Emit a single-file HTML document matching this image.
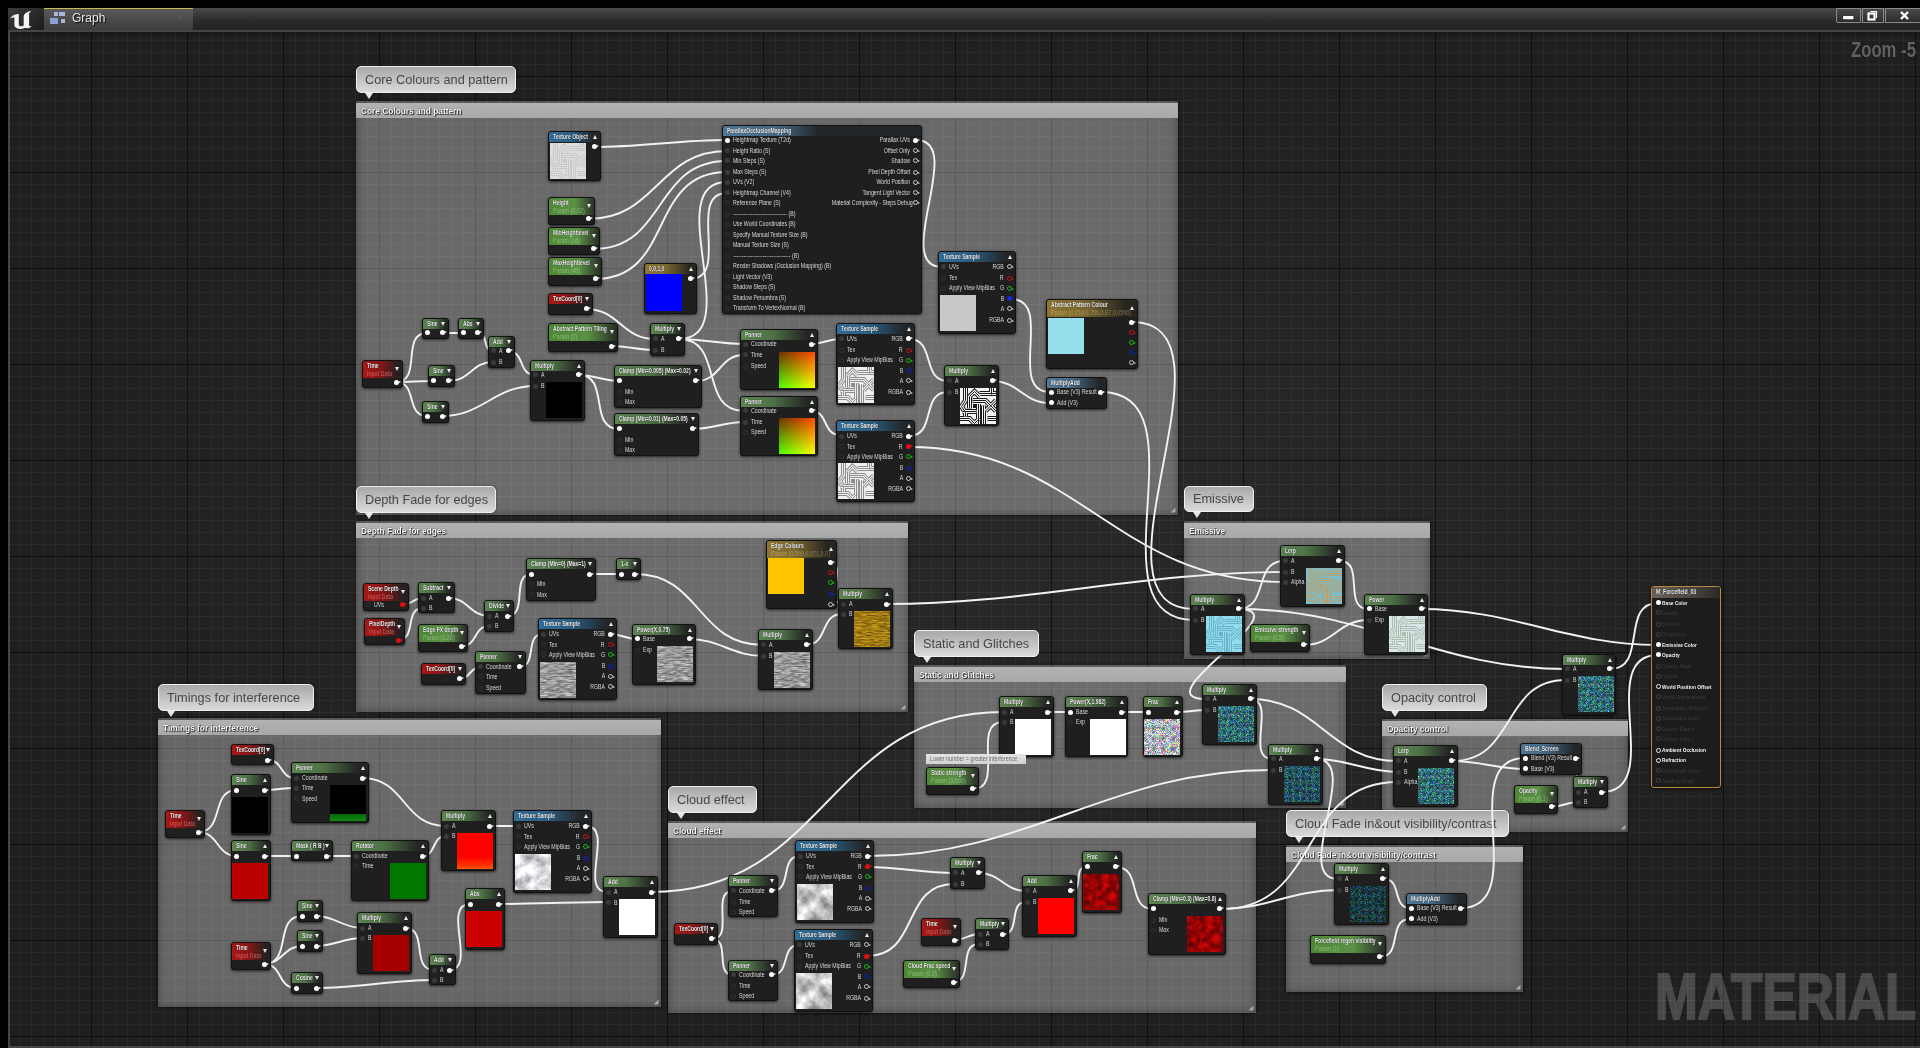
<!DOCTYPE html><html><head><meta charset="utf-8"><style>
*{margin:0;padding:0;box-sizing:border-box}
html,body{width:1920px;height:1048px;overflow:hidden;background:#000;font-family:"Liberation Sans",sans-serif}
.a{position:absolute}
#grid{position:absolute;left:10px;top:32px;width:1910px;height:1014px;background-color:#272727;
background-image:linear-gradient(to right,#121212 1px,transparent 1px),linear-gradient(to bottom,#121212 1px,transparent 1px),linear-gradient(to right,#333 1px,transparent 1px),linear-gradient(to bottom,#333 1px,transparent 1px);
background-size:96px 96px,96px 96px,12px 12px,12px 12px;background-position:81px 44px,81px 44px,9px 8px,9px 8px}
.cb{position:absolute;background:rgba(255,255,255,.32);box-shadow:inset 0 0 10px rgba(0,0,0,.35),0 0 3px rgba(0,0,0,.8)}
.ch{position:absolute;left:0;right:0;top:2px;height:15px;background:linear-gradient(#b2b2b2,#a8a8a8);color:#fff;font-size:9.8px;font-weight:bold;line-height:15px;padding-left:5px;text-shadow:0 0 1px #000,1px 1px 1px #222;white-space:nowrap}
.ch span{display:inline-block;transform-origin:0 50%;transform:scaleX(.85)}
.bub{position:absolute;border-radius:5px;background:linear-gradient(#a8a8a8,#dadada);border:1px solid #f0f0f0;box-shadow:0 0 2px rgba(0,0,0,.6);color:#474747;font-size:13.4px;padding-left:8px;white-space:nowrap}
.bub span{display:inline-block;transform-origin:0 50%;transform:scaleX(.95)}
.bub:after{content:"";position:absolute;left:8px;bottom:-7px;border-left:4px solid transparent;border-right:4px solid transparent;border-top:6px solid #e6e6e6}
.n{position:absolute;background:#1f1f1f;border:1px solid #111;border-radius:3px;box-shadow:0 1px 3px rgba(0,0,0,.7);overflow:hidden}
.nh{position:absolute;left:0;top:0;right:0;color:#f0f0f0;font-size:6.8px;line-height:8px;padding:1px 0 0 4px;white-space:nowrap;text-shadow:0 0 1px #000}
.nh span{display:inline-block;transform-origin:0 50%;transform:scaleX(.8)}
.nh span:first-child{font-weight:bold;transform:scaleX(.74)}
.ns{color:rgba(215,240,200,.42);text-shadow:none}
.r .ns{color:rgba(255,140,140,.6)}
.o .ns{color:rgba(255,230,160,.35)}
.tri{position:absolute;right:3px;top:2px;width:0;height:0;border-left:2.5px solid transparent;border-right:2.5px solid transparent}
.up{border-bottom:4px solid #e8e8e8}
.dn{border-top:4px solid #e8e8e8}
.lb{position:absolute;font-size:6.4px;color:#d8d8d8;white-space:nowrap;line-height:8px}
.lb span{display:inline-block;transform-origin:0 50%;transform:scaleX(.82)}
.lbr span{transform-origin:100% 50%}
.pc{position:absolute;width:5px;height:5px;border-radius:50%;background:#fff}
.pu{position:absolute;width:5px;height:5px;border-radius:50%;background:#3a3a3a}
.po{position:absolute;width:5px;height:5px;border-radius:50%;border:1px solid #333}
.pv{position:absolute}
.ar::after{content:"";position:absolute;left:3.5px;top:.5px;border-left:2px solid currentColor;border-top:1.5px solid transparent;border-bottom:1.5px solid transparent}
.pc.ar::after{left:4.5px;top:1px}

</style></head><body>
<svg width="0" height="0" style="position:absolute">
<defs>
<filter id="fGrey" x="0" y="0" width="100%" height="100%" color-interpolation-filters="sRGB"><feTurbulence type="fractalNoise" baseFrequency="0.12 0.7" numOctaves="3" seed="3"/><feColorMatrix type="matrix" values="0.75 0 0 0 0.22  0.75 0 0 0 0.22  0.75 0 0 0 0.22  0 0 0 0 1"/><feComposite in2="SourceGraphic" operator="in"/></filter>
<filter id="fGold" x="0" y="0" width="100%" height="100%" color-interpolation-filters="sRGB"><feTurbulence type="fractalNoise" baseFrequency="0.12 0.7" numOctaves="3" seed="5"/><feColorMatrix type="matrix" values="0.75 0 0 0 0.25  0.6 0 0 0 0.18  0.1 0 0 0 0.02  0 0 0 0 1"/><feComposite in2="SourceGraphic" operator="in"/></filter>
<filter id="fCloud" x="0" y="0" width="100%" height="100%" color-interpolation-filters="sRGB"><feTurbulence type="fractalNoise" baseFrequency="0.065" numOctaves="4" seed="7"/><feColorMatrix type="matrix" values="1.0 0 0 0 0.25  1.0 0 0 0 0.25  1.0 0 0 0 0.25  0 0 0 0 1"/><feComposite in2="SourceGraphic" operator="in"/></filter>
<filter id="fCloudW" x="0" y="0" width="100%" height="100%" color-interpolation-filters="sRGB"><feTurbulence type="fractalNoise" baseFrequency="0.09" numOctaves="4" seed="11"/><feColorMatrix type="matrix" values="0.8 0 0 0 0.45  0.8 0 0 0 0.45  0.8 0 0 0 0.47  0 0 0 0 1"/><feComposite in2="SourceGraphic" operator="in"/></filter>
<filter id="fCol" x="0" y="0" width="100%" height="100%" color-interpolation-filters="sRGB"><feTurbulence type="turbulence" baseFrequency="0.9" numOctaves="1" seed="2"/><feColorMatrix type="matrix" values="1.8 0 0 0 0.4  0 1.8 0 0 0.4  0 0 1.8 0 0.45  0 0 0 0 1"/><feComposite in2="SourceGraphic" operator="in"/></filter>
<filter id="fTeal" x="0" y="0" width="100%" height="100%" color-interpolation-filters="sRGB"><feTurbulence type="turbulence" baseFrequency="0.85" numOctaves="1" seed="5"/><feColorMatrix type="matrix" values="0.9 0 0 0 0.05  0 1.3 0 0 0.22  0 0 1.2 0 0.25  0 0 0 0 1"/><feComposite in2="SourceGraphic" operator="in"/></filter>
<filter id="fTeal2" x="0" y="0" width="100%" height="100%" color-interpolation-filters="sRGB"><feTurbulence type="turbulence" baseFrequency="0.85" numOctaves="1" seed="8"/><feColorMatrix type="matrix" values="0.7 0 0 0 0.03  0 1.1 0 0 0.15  0 0 1.1 0 0.2  0 0 0 0 1"/><feComposite in2="SourceGraphic" operator="in"/></filter>
<filter id="fDark" x="0" y="0" width="100%" height="100%" color-interpolation-filters="sRGB"><feTurbulence type="turbulence" baseFrequency="0.85" numOctaves="1" seed="9"/><feColorMatrix type="matrix" values="0.5 0 0 0 0.02  0 0.8 0 0 0.1  0 0 0.8 0 0.12  0 0 0 0 1"/><feComposite in2="SourceGraphic" operator="in"/></filter>
<filter id="fRed" x="0" y="0" width="100%" height="100%" color-interpolation-filters="sRGB"><feTurbulence type="fractalNoise" baseFrequency="0.15" numOctaves="3" seed="4"/><feColorMatrix type="matrix" values="0.75 0 0 0 0.22  0.03 0 0 0 0  0.03 0 0 0 0  0 0 0 0 1"/><feComposite in2="SourceGraphic" operator="in"/></filter>

</defs></svg>
<div class="a" style="left:8px;top:8px;width:1912px;height:22px;background:linear-gradient(#4a4a4a,#2b2b2b 55%,#222)"></div>
<div class="a" style="left:8px;top:8px;width:36px;height:22px;background:linear-gradient(135deg,#3c3c3c,#1c1c1c)"></div>
<svg class="a" style="left:8px;top:8px" width="36" height="22"><path transform="translate(0.5 -1.5) scale(.98 .82)" d="M1.5 14.5C3.5 11 6.5 9.5 9.5 9L10.5 9L10.5 22C10.5 24 12.5 24.8 14.5 23.8L15.5 23.2L15.5 12C15.5 9.5 18 7 22 5.5L23 5.5L21 8.2L21 22.5C21 24 22.3 24.6 23.8 23.8C22 26.5 19 27.2 17 26C15 27.6 11 27.8 8.5 26.5C6.8 25.5 6 24 6 22L6 13.2C4.5 13.4 3 13.9 1.5 14.5Z" fill="#f4f4f4"/></svg>
<div class="a" style="left:44px;top:8px;width:149px;height:22px;background:linear-gradient(#5a5a5a,#3c3c3c);border-top:1px solid #c9b458"></div>
<div class="a" style="left:54px;top:12px;width:4px;height:4px;background:#a9b6dc"></div><div class="a" style="left:59px;top:12px;width:6px;height:4px;background:#a9b6dc"></div><div class="a" style="left:50px;top:18px;width:8px;height:6px;background:#8c9fd4"></div><div class="a" style="left:61px;top:19px;width:4px;height:4px;background:#a9b6dc"></div>
<div class="a" style="left:72px;top:10px;color:#e8e8e8;font-size:12px;line-height:16px;text-shadow:1px 1px 1px #000">Graph</div>
<div class="a" style="left:176px;top:10px;color:#5a5a5a;font-size:12px;line-height:16px">&#215;</div>
<div class="a" style="left:1836px;top:8px;width:25px;height:15px;border:1px solid #8a8a8a;border-radius:0 0 0 2px;background:linear-gradient(#4a4a4a,#2c2c2c)"></div>
<div class="a" style="left:1862px;top:8px;width:22px;height:15px;border:1px solid #8a8a8a;background:linear-gradient(#4a4a4a,#2c2c2c)"></div>
<div class="a" style="left:1885px;top:8px;width:35px;height:15px;border:1px solid #8a8a8a;border-right:none;background:linear-gradient(#4a4a4a,#2c2c2c)"></div>
<svg class="a" style="left:1836px;top:8px" width="84" height="16"><g fill="none" stroke="#fff" stroke-linecap="square"><rect x="7" y="8" width="10.5" height="3.2" fill="#fff" stroke="none" rx="1"/><path d="M35 3.5h5.5v6" stroke-width="1.2"/><rect x="32.5" y="5.5" width="6" height="6" stroke-width="2.2"/><path d="M65 4l7 7M72 4l-7 7" stroke-width="2.4" stroke-linecap="butt"/></g></svg>
<div class="a" style="left:8px;top:30px;width:1912px;height:1018px;background:#454545"></div>
<div id="grid"></div>
<div class="a" style="left:10px;top:32px;width:1910px;height:1014px;background:radial-gradient(ellipse 960px 540px at 950px 508px,rgba(0,0,0,0) 30%,rgba(0,0,0,.2) 100%)"></div>
<div class="a" style="left:10px;top:32px;width:1910px;height:6px;background:linear-gradient(rgba(0,0,0,.25),rgba(0,0,0,0))"></div>
<div class="a" style="left:1851px;top:39px;color:#626262;text-shadow:0 0 2px #151515;font-size:21.7px;font-weight:bold;line-height:21.7px;white-space:nowrap;transform-origin:0 0;transform:scaleX(.77)">Zoom -5</div>
<div class="a" style="left:1655px;top:964px;color:#2a2a2a;-webkit-text-stroke:2.2px #2a2a2a;mix-blend-mode:plus-lighter;font-size:65px;font-weight:bold;line-height:65px;white-space:nowrap;transform-origin:0 0;transform:scaleX(.79)">MATERIAL</div>
<div class="cb" style="left:356px;top:101px;width:822px;height:414px"><div class="ch"><span>Core Colours and pattern</span></div><svg class="a" style="right:1px;bottom:1px" width="8" height="8"><path d="M2.5 6.5L6.5 2.5M4.5 6.5L6.5 4.5" stroke="#b0b0b0" stroke-width="1.2"/></svg></div>
<div class="cb" style="left:356px;top:521px;width:552px;height:191px"><div class="ch"><span>Depth Fade for edges</span></div><svg class="a" style="right:1px;bottom:1px" width="8" height="8"><path d="M2.5 6.5L6.5 2.5M4.5 6.5L6.5 4.5" stroke="#b0b0b0" stroke-width="1.2"/></svg></div>
<div class="cb" style="left:158px;top:718px;width:503px;height:289px"><div class="ch"><span>Timings for interference</span></div><svg class="a" style="right:1px;bottom:1px" width="8" height="8"><path d="M2.5 6.5L6.5 2.5M4.5 6.5L6.5 4.5" stroke="#b0b0b0" stroke-width="1.2"/></svg></div>
<div class="cb" style="left:1184px;top:521px;width:246px;height:138px"><div class="ch"><span>Emissive</span></div><svg class="a" style="right:1px;bottom:1px" width="8" height="8"><path d="M2.5 6.5L6.5 2.5M4.5 6.5L6.5 4.5" stroke="#b0b0b0" stroke-width="1.2"/></svg></div>
<div class="cb" style="left:914px;top:665px;width:432px;height:143px"><div class="ch"><span>Static and Glitches</span></div><svg class="a" style="right:1px;bottom:1px" width="8" height="8"><path d="M2.5 6.5L6.5 2.5M4.5 6.5L6.5 4.5" stroke="#b0b0b0" stroke-width="1.2"/></svg></div>
<div class="cb" style="left:668px;top:821px;width:588px;height:192px"><div class="ch"><span>Cloud effect</span></div><svg class="a" style="right:1px;bottom:1px" width="8" height="8"><path d="M2.5 6.5L6.5 2.5M4.5 6.5L6.5 4.5" stroke="#b0b0b0" stroke-width="1.2"/></svg></div>
<div class="cb" style="left:1382px;top:719px;width:246px;height:113px"><div class="ch"><span>Opacity control</span></div><svg class="a" style="right:1px;bottom:1px" width="8" height="8"><path d="M2.5 6.5L6.5 2.5M4.5 6.5L6.5 4.5" stroke="#b0b0b0" stroke-width="1.2"/></svg></div>
<div class="cb" style="left:1286px;top:845px;width:237px;height:147px"><div class="ch"><span>Cloud Fade in&amp;out visibility/contrast</span></div><svg class="a" style="right:1px;bottom:1px" width="8" height="8"><path d="M2.5 6.5L6.5 2.5M4.5 6.5L6.5 4.5" stroke="#b0b0b0" stroke-width="1.2"/></svg></div>
<div class="bub" style="left:356px;top:66px;width:160px;height:27px;line-height:25px"><span>Core Colours and pattern</span></div>
<div class="bub" style="left:356px;top:486px;width:140px;height:27px;line-height:25px"><span>Depth Fade for edges</span></div>
<div class="bub" style="left:158px;top:684px;width:156px;height:27px;line-height:25px"><span>Timings for interference</span></div>
<div class="bub" style="left:1184px;top:486px;width:70px;height:26px;line-height:24px"><span>Emissive</span></div>
<div class="bub" style="left:914px;top:630px;width:125px;height:27px;line-height:25px"><span>Static and Glitches</span></div>
<div class="bub" style="left:668px;top:786px;width:89px;height:27px;line-height:25px"><span>Cloud effect</span></div>
<div class="bub" style="left:1382px;top:684px;width:105px;height:27px;line-height:25px"><span>Opacity control</span></div>
<div class="bub" style="left:1286px;top:810px;width:223px;height:27px;line-height:25px"><span>Cloud Fade in&amp;out visibility/contrast</span></div>
<svg class="a" style="left:0;top:0" width="1920" height="1048"><g fill="none" stroke="#f2f2f2" stroke-width="1.9" stroke-linecap="round">
<path d="M594 147C640.7 147 680.3 140 727 140"/>
<path d="M588 219C657.0 219 658.0 151 727 151"/>
<path d="M593 249C667.0 249 653.0 161 727 161"/>
<path d="M595 279C674.7 279 647.3 172 727 172"/>
<path d="M690 279C731.0 279 686.0 193 727 193"/>
<path d="M679 339C747.3 339 658.7 182 727 182"/>
<path d="M586 309C619.0 309 622.0 339 655 339"/>
<path d="M611 346C627.0 346 639.0 350 655 350"/>
<path d="M679 339C702.3 339 720.7 344 744 344"/>
<path d="M679 339C724.7 339 698.3 411 744 411"/>
<path d="M696 381C720.7 381 719.3 355 744 355"/>
<path d="M693 429C712.3 429 724.7 422 744 422"/>
<path d="M396 382C422.7 382 400.3 333 427 333"/>
<path d="M396 382C408.7 382 420.3 381 433 381"/>
<path d="M396 382C417.7 382 405.3 416 427 416"/>
<path d="M442 333C449.0 333 456.0 333 463 333"/>
<path d="M478 333C489.0 333 482.0 351 493 351"/>
<path d="M449 381C470.0 381 472.0 362 493 362"/>
<path d="M508 351C525.0 351 518.0 375 535 375"/>
<path d="M442 416C483.0 416 494.0 386 535 386"/>
<path d="M579 375C594.3 375 603.7 381 619 381"/>
<path d="M579 375C610.3 375 587.7 429 619 429"/>
<path d="M811 344C822.3 344 828.7 339 840 339"/>
<path d="M811 411C828.7 411 822.3 435 840 435"/>
<path d="M909 339C936.0 339 921.0 381 948 381"/>
<path d="M909 436C936.7 436 920.3 392 948 392"/>
<path d="M909 447C1079.0 447 1114.0 582 1284 582"/>
<path d="M916 140C967.0 140 891.0 267 942 267"/>
<path d="M1011 299C1055.0 299 1006.0 392 1050 392"/>
<path d="M992 381C1018.7 381 1023.3 403 1050 403"/>
<path d="M1132 322C1248.3 322 1077.7 609 1194 609"/>
<path d="M1101 392C1208.0 392 1087.0 620 1194 620"/>
<path d="M402 605C411.3 605 413.7 598 423 598"/>
<path d="M398 640C417.0 640 404.0 608 423 608"/>
<path d="M449 598C468.3 598 469.7 616 489 616"/>
<path d="M462 646C477.7 646 473.3 626 489 626"/>
<path d="M507 616C529.3 616 509.7 574 532 574"/>
<path d="M589 574C599.7 574 610.3 574 621 574"/>
<path d="M635 574C701.3 574 696.7 645 763 645"/>
<path d="M459 679C470.3 679 469.7 667 481 667"/>
<path d="M519 667C538.0 667 524.0 634 543 634"/>
<path d="M610 634C620.7 634 626.3 639 637 639"/>
<path d="M689 639C719.3 639 732.7 656 763 656"/>
<path d="M806 645C828.3 645 819.7 614 842 614"/>
<path d="M830 562C848.0 562 824.0 604 842 604"/>
<path d="M886 604C1029.3 604 1140.7 572 1284 572"/>
<path d="M198 832C225.0 832 210.0 790 237 790"/>
<path d="M198 832C219.0 832 216.0 856 237 856"/>
<path d="M268 760C283.0 760 280.0 778 295 778"/>
<path d="M264 790C275.0 790 284.0 788 295 788"/>
<path d="M362 778C406.0 778 402.0 826 446 826"/>
<path d="M264 856C274.7 856 285.3 856 296 856"/>
<path d="M327 856C336.7 856 346.3 856 356 856"/>
<path d="M422 856C436.7 856 431.3 836 446 836"/>
<path d="M264 964C292.7 964 273.3 916 302 916"/>
<path d="M264 964C282.7 964 283.3 946 302 946"/>
<path d="M264 964C282.7 964 277.3 988 296 988"/>
<path d="M316 916C335.3 916 342.7 928 362 928"/>
<path d="M316 946C334.0 946 344.0 938 362 938"/>
<path d="M316 988C358.0 988 392.0 980 434 980"/>
<path d="M405 928C428.7 928 410.3 970 434 970"/>
<path d="M449 970C478.0 970 441.0 904 470 904"/>
<path d="M489 826C498.7 826 508.3 826 518 826"/>
<path d="M586 826C615.0 826 578.0 892 607 892"/>
<path d="M498 904C535.0 904 570.0 902 607 902"/>
<path d="M651 892C828.3 892 825.7 712 1003 712"/>
<path d="M712 939C735.0 939 710.0 891 733 891"/>
<path d="M712 939C731.0 939 714.0 975 733 975"/>
<path d="M772 891C793.0 891 779.0 856 800 856"/>
<path d="M772 975C791.0 975 780.0 945 799 945"/>
<path d="M868 867C898.7 867 923.3 873 954 873"/>
<path d="M867 956C920.0 956 901.0 884 954 884"/>
<path d="M868 856C1031.3 856 1108.7 770 1272 770"/>
<path d="M955 940C965.0 940 969.0 934 979 934"/>
<path d="M953 982C974.3 982 957.7 944 979 944"/>
<path d="M979 873C1000.7 873 1004.3 891 1026 891"/>
<path d="M1003 934C1021.3 934 1007.7 902 1026 902"/>
<path d="M1071 891C1084.0 891 1073.0 867 1086 867"/>
<path d="M1116 867C1142.3 867 1126.7 909 1153 909"/>
<path d="M1221 909C1322.3 909 1296.7 782 1398 782"/>
<path d="M1221 909C1266.3 909 1292.7 890 1338 890"/>
<path d="M973 789C1005.3 789 970.7 722 1003 722"/>
<path d="M1048 712C1055.0 712 1062.0 712 1069 712"/>
<path d="M1122 712C1130.3 712 1138.7 712 1147 712"/>
<path d="M1177 712C1187.7 712 1196.3 710 1207 710"/>
<path d="M1250 699C1277.3 699 1244.7 759 1272 759"/>
<path d="M1250 699C1320.0 699 1328.0 761 1398 761"/>
<path d="M1316 759C1363.3 759 1290.7 879 1338 879"/>
<path d="M1316 759C1347.7 759 1366.3 772 1398 772"/>
<path d="M1238 609C1304.3 609 1139.7 699 1206 699"/>
<path d="M1238 609C1269.3 609 1252.7 561 1284 561"/>
<path d="M1238 609C1367.3 609 1436.7 669 1566 669"/>
<path d="M1340 561C1365.3 561 1342.7 609 1368 609"/>
<path d="M1304 645C1333.7 645 1338.3 620 1368 620"/>
<path d="M1421 609C1512.0 609 1567.0 645 1658 645"/>
<path d="M1610 669C1648.0 669 1620.0 603 1658 603"/>
<path d="M1452 761C1517.0 761 1501.0 680 1566 680"/>
<path d="M1452 761C1479.0 761 1498.0 769 1525 769"/>
<path d="M1461 908C1532.3 908 1453.7 758 1525 758"/>
<path d="M1576 758C1588.0 758 1566.0 792 1578 792"/>
<path d="M1551 807C1561.7 807 1567.3 802 1578 802"/>
<path d="M1602 792C1666.3 792 1593.7 655 1658 655"/>
<path d="M1384 879C1402.3 879 1391.7 908 1410 908"/>
<path d="M1380 957C1402.7 957 1387.3 919 1410 919"/>
</g></svg>
<div class="n b" style="left:548px;top:131px;width:53px;height:50px"><div class="nh" style="height:10px;background:linear-gradient(to right,#2f6d98 0px,#2a5f85 21px,#222629 45px)"><span>Texture Object</span></div><div class="tri up" style="top:3px"></div></div>
<svg class="pv" style="left:550px;top:143px;width:36px;height:36px" width="36" height="36" viewBox="0 0 36 36" preserveAspectRatio="none"><rect width="36" height="36" fill="#dedede"/><g fill="none" stroke-linecap="butt" stroke-linejoin="miter"><path d="M5.5 0V12.5L1.5 18.5L5.5 24.5V28.5M9.5 20.5V8.5L14.5 3.5L19.5 8.5M19.5 5.5H36M12.5 12.5H25.5L30.5 17.5M25.5 12.5L36 23M36 12.5L25.5 23M18.5 16V36M23.5 17.5V36M2.5 23.5H16.5M0 30.5H9.5L14.5 35.5L19.5 30.5M27.5 30.5H36M31.5 0V6.5" stroke="#c8c8c8" stroke-width="5"/><path d="M5.5 0V12.5L1.5 18.5L5.5 24.5V28.5M9.5 20.5V8.5L14.5 3.5L19.5 8.5M19.5 5.5H36M12.5 12.5H25.5L30.5 17.5M25.5 12.5L36 23M36 12.5L25.5 23M18.5 16V36M23.5 17.5V36M2.5 23.5H16.5M0 30.5H9.5L14.5 35.5L19.5 30.5M27.5 30.5H36M31.5 0V6.5" stroke="#dedede" stroke-width="3"/><path d="M5.5 0V12.5L1.5 18.5L5.5 24.5V28.5M9.5 20.5V8.5L14.5 3.5L19.5 8.5M19.5 5.5H36M12.5 12.5H25.5L30.5 17.5M25.5 12.5L36 23M36 12.5L25.5 23M18.5 16V36M23.5 17.5V36M2.5 23.5H16.5M0 30.5H9.5L14.5 35.5L19.5 30.5M27.5 30.5H36M31.5 0V6.5" stroke="#c8c8c8" stroke-width="1"/></g><rect x="13" y="16" width="3" height="4" fill="#c8c8c8"/></svg>
<div class="pc ar" style="left:592px;top:144px;color:#eee"></div>
<div class="n p" style="left:548px;top:197px;width:47px;height:28px"><div class="nh" style="height:17px;background:linear-gradient(to right,#4e8836 0px,#5a9244 26px,#282c26 46px)"><span>Height</span><br><span class="ns">Param (0.02)</span></div><div class="tri dn" style="top:6px"></div></div>
<div class="pc ar" style="left:586px;top:216px;color:#eee"></div>
<div class="n p" style="left:548px;top:227px;width:52px;height:28px"><div class="nh" style="height:17px;background:linear-gradient(to right,#4e8836 0px,#5a9244 29px,#282c26 50px)"><span>MinHeightlevel</span><br><span class="ns">Param (16)</span></div><div class="tri dn" style="top:6px"></div></div>
<div class="pc ar" style="left:591px;top:246px;color:#eee"></div>
<div class="n p" style="left:548px;top:257px;width:54px;height:29px"><div class="nh" style="height:17px;background:linear-gradient(to right,#4e8836 0px,#5a9244 30px,#282c26 52px)"><span>MaxHeightlevel</span><br><span class="ns">Param (48)</span></div><div class="tri dn" style="top:6px"></div></div>
<div class="pc ar" style="left:593px;top:276px;color:#eee"></div>
<div class="n r" style="left:548px;top:293px;width:45px;height:22px"><div class="nh" style="height:10px;background:linear-gradient(to right,#a81818 0px,#8a1616 18px,#262020 38px)"><span>TexCoord[0]</span></div><div class="tri dn" style="top:3px"></div></div>
<div class="pc ar" style="left:584px;top:306px;color:#eee"></div>
<div class="n o" style="left:644px;top:263px;width:53px;height:51px"><div class="nh" style="height:10px;background:linear-gradient(to right,#8f7630 0px,#7a6830 21px,#27251f 45px)"><span>0,0,1,0</span></div><div class="tri up" style="top:3px"></div></div>
<div class="pv" style="left:646px;top:274px;width:36px;height:37px;background:#0000ff"></div>
<div class="pc ar" style="left:688px;top:276px;color:#eee"></div>
<div class="n f" style="left:722px;top:125px;width:200px;height:189px"><div class="nh" style="height:10px;background:linear-gradient(to right,#4f7895 0px,#456884 55px,#232628 95px)"><span>ParallaxOcclusionMapping</span></div></div>
<div class="pc" style="left:725px;top:138px"></div>
<div class="lb" style="left:733px;top:136px"><span>Heightmap Texture (T2d)</span></div>
<div class="pu" style="left:725px;top:148px"></div>
<div class="lb" style="left:733px;top:147px"><span>Height Ratio (S)</span></div>
<div class="pu" style="left:725px;top:158px"></div>
<div class="lb" style="left:733px;top:157px"><span>Min Steps (S)</span></div>
<div class="pu" style="left:725px;top:170px"></div>
<div class="lb" style="left:733px;top:168px"><span>Max Steps (S)</span></div>
<div class="pu" style="left:725px;top:180px"></div>
<div class="lb" style="left:733px;top:178px"><span>UVs (V2)</span></div>
<div class="pu" style="left:725px;top:190px"></div>
<div class="lb" style="left:733px;top:189px"><span>Heightmap Channel (V4)</span></div>
<div class="po" style="left:725px;top:200px"></div>
<div class="lb" style="left:733px;top:199px"><span>Reference Plane (S)</span></div>
<div class="po" style="left:725px;top:212px"></div>
<div class="lb" style="left:733px;top:210px"><span>------------------------------- (B)</span></div>
<div class="po" style="left:725px;top:222px"></div>
<div class="lb" style="left:733px;top:220px"><span>Use World Coordinates (B)</span></div>
<div class="po" style="left:725px;top:232px"></div>
<div class="lb" style="left:733px;top:231px"><span>Specify Manual Texture Size (B)</span></div>
<div class="po" style="left:725px;top:242px"></div>
<div class="lb" style="left:733px;top:241px"><span>Manual Texture Size (S)</span></div>
<div class="po" style="left:725px;top:254px"></div>
<div class="lb" style="left:733px;top:252px"><span>--------------------------------- (B)</span></div>
<div class="po" style="left:725px;top:264px"></div>
<div class="lb" style="left:733px;top:262px"><span>Render Shadows (Occlusion Mapping) (B)</span></div>
<div class="po" style="left:725px;top:274px"></div>
<div class="lb" style="left:733px;top:273px"><span>Light Vector (V3)</span></div>
<div class="po" style="left:725px;top:284px"></div>
<div class="lb" style="left:733px;top:283px"><span>Shadow Steps (S)</span></div>
<div class="po" style="left:725px;top:296px"></div>
<div class="lb" style="left:733px;top:294px"><span>Shadow Penumbra (S)</span></div>
<div class="po" style="left:725px;top:306px"></div>
<div class="lb" style="left:733px;top:304px"><span>Transform To VertexNormal (B)</span></div>
<div class="pc ar" style="left:913px;top:138px;color:#eee"></div>
<div class="lb lbr" style="left:814px;width:96px;text-align:right;top:136px"><span>Parallax UVs</span></div>
<div class="po ar" style="left:913px;top:148px;border-color:#ccc;color:#ccc"></div>
<div class="lb lbr" style="left:814px;width:96px;text-align:right;top:147px"><span>Offset Only</span></div>
<div class="po ar" style="left:913px;top:158px;border-color:#ccc;color:#ccc"></div>
<div class="lb lbr" style="left:814px;width:96px;text-align:right;top:157px"><span>Shadow</span></div>
<div class="po ar" style="left:913px;top:170px;border-color:#ccc;color:#ccc"></div>
<div class="lb lbr" style="left:814px;width:96px;text-align:right;top:168px"><span>Pixel Depth Offset</span></div>
<div class="po ar" style="left:913px;top:180px;border-color:#ccc;color:#ccc"></div>
<div class="lb lbr" style="left:814px;width:96px;text-align:right;top:178px"><span>World Position</span></div>
<div class="po ar" style="left:913px;top:190px;border-color:#ccc;color:#ccc"></div>
<div class="lb lbr" style="left:814px;width:96px;text-align:right;top:189px"><span>Tangent Light Vector</span></div>
<div class="po ar" style="left:913px;top:200px;border-color:#ccc;color:#ccc"></div>
<div class="lb lbr" style="left:814px;width:96px;text-align:right;top:199px"><span>Material Complexity - Steps Debug</span></div>
<div class="n p" style="left:548px;top:323px;width:70px;height:29px"><div class="nh" style="height:17px;background:linear-gradient(to right,#4e8836 0px,#5a9244 38px,#282c26 68px)"><span>Abstract Pattern Tiling</span><br><span class="ns">Param (2)</span></div><div class="tri dn" style="top:6px"></div></div>
<div class="pc ar" style="left:609px;top:344px;color:#eee"></div>
<div class="n g" style="left:650px;top:323px;width:35px;height:33px"><div class="nh" style="height:10px;background:linear-gradient(to right,#5c8450 0px,#4e7246 14px,#232523 30px)"><span>Multiply</span></div><div class="tri dn" style="top:3px"></div></div>
<div class="pu" style="left:653px;top:336px"></div>
<div class="lb" style="left:661px;top:335px"><span>A</span></div>
<div class="pu" style="left:653px;top:348px"></div>
<div class="lb" style="left:661px;top:346px"><span>B</span></div>
<div class="pc ar" style="left:676px;top:336px;color:#eee"></div>
<div class="n r" style="left:362px;top:360px;width:41px;height:28px"><div class="nh" style="height:17px;background:linear-gradient(to right,#a81818 0px,#8a1616 16px,#262020 35px)"><span>Time</span><br><span class="ns">Input Data</span></div><div class="tri dn" style="top:6px"></div></div>
<div class="pc ar" style="left:394px;top:380px;color:#eee"></div>
<div class="n g" style="left:422px;top:318px;width:27px;height:21px"><div class="nh" style="height:10px;background:linear-gradient(to right,#5c8450 0px,#4e7246 11px,#232523 23px)"><span>Sine</span></div><div class="tri dn" style="top:3px"></div></div>
<div class="pc" style="left:425px;top:330px"></div>
<div class="pc ar" style="left:440px;top:330px;color:#eee"></div>
<div class="n g" style="left:458px;top:318px;width:26px;height:21px"><div class="nh" style="height:10px;background:linear-gradient(to right,#5c8450 0px,#4e7246 10px,#232523 22px)"><span>Abs</span></div><div class="tri dn" style="top:3px"></div></div>
<div class="pc" style="left:461px;top:330px"></div>
<div class="pc ar" style="left:475px;top:330px;color:#eee"></div>
<div class="n g" style="left:488px;top:336px;width:27px;height:32px"><div class="nh" style="height:10px;background:linear-gradient(to right,#5c8450 0px,#4e7246 11px,#232523 23px)"><span>Add</span></div><div class="tri dn" style="top:3px"></div></div>
<div class="pu" style="left:491px;top:348px"></div>
<div class="lb" style="left:499px;top:347px"><span>A</span></div>
<div class="pu" style="left:491px;top:360px"></div>
<div class="lb" style="left:499px;top:358px"><span>B</span></div>
<div class="pc ar" style="left:506px;top:348px;color:#eee"></div>
<div class="n g" style="left:428px;top:365px;width:27px;height:22px"><div class="nh" style="height:10px;background:linear-gradient(to right,#5c8450 0px,#4e7246 11px,#232523 23px)"><span>Sine</span></div><div class="tri dn" style="top:3px"></div></div>
<div class="pc" style="left:431px;top:378px"></div>
<div class="pc ar" style="left:446px;top:378px;color:#eee"></div>
<div class="n g" style="left:422px;top:401px;width:27px;height:22px"><div class="nh" style="height:10px;background:linear-gradient(to right,#5c8450 0px,#4e7246 11px,#232523 23px)"><span>Sine</span></div><div class="tri dn" style="top:3px"></div></div>
<div class="pc" style="left:425px;top:414px"></div>
<div class="pc ar" style="left:440px;top:414px;color:#eee"></div>
<div class="n g" style="left:530px;top:360px;width:55px;height:61px"><div class="nh" style="height:10px;background:linear-gradient(to right,#5c8450 0px,#4e7246 22px,#232523 47px)"><span>Multiply</span></div><div class="tri up" style="top:3px"></div></div>
<div class="pv" style="left:546px;top:382px;width:36px;height:36px;background:#000"></div>
<div class="pu" style="left:533px;top:372px"></div>
<div class="lb" style="left:541px;top:371px"><span>A</span></div>
<div class="pu" style="left:533px;top:384px"></div>
<div class="lb" style="left:541px;top:382px"><span>B</span></div>
<div class="pc ar" style="left:576px;top:372px;color:#eee"></div>
<div class="n g" style="left:614px;top:365px;width:88px;height:43px"><div class="nh" style="height:10px;background:linear-gradient(to right,#5c8450 0px,#4e7246 35px,#232523 75px)"><span>Clamp (Min=0.005) (Max=0.02)</span></div><div class="tri dn" style="top:3px"></div></div>
<div class="pc" style="left:617px;top:378px"></div>
<div class="po" style="left:617px;top:390px"></div>
<div class="lb" style="left:625px;top:388px"><span>Min</span></div>
<div class="po" style="left:617px;top:400px"></div>
<div class="lb" style="left:625px;top:398px"><span>Max</span></div>
<div class="pc ar" style="left:693px;top:378px;color:#eee"></div>
<div class="n g" style="left:614px;top:413px;width:85px;height:43px"><div class="nh" style="height:10px;background:linear-gradient(to right,#5c8450 0px,#4e7246 34px,#232523 72px)"><span>Clamp (Min=0.01) (Max=0.05)</span></div><div class="tri dn" style="top:3px"></div></div>
<div class="pc" style="left:617px;top:426px"></div>
<div class="po" style="left:617px;top:438px"></div>
<div class="lb" style="left:625px;top:436px"><span>Min</span></div>
<div class="po" style="left:617px;top:448px"></div>
<div class="lb" style="left:625px;top:446px"><span>Max</span></div>
<div class="pc ar" style="left:690px;top:426px;color:#eee"></div>
<div class="n g" style="left:740px;top:329px;width:78px;height:61px"><div class="nh" style="height:10px;background:linear-gradient(to right,#5c8450 0px,#4e7246 31px,#232523 66px)"><span>Panner</span></div><div class="tri up" style="top:3px"></div></div>
<div class="pv" style="left:779px;top:352px;width:36px;height:36px;background:linear-gradient(to right,rgba(255,40,0,.25),#ff2a00),linear-gradient(#3a2a00,#10ff00);background-blend-mode:screen"></div>
<div class="pu" style="left:743px;top:342px"></div>
<div class="lb" style="left:751px;top:340px"><span>Coordinate</span></div>
<div class="pu" style="left:743px;top:352px"></div>
<div class="lb" style="left:751px;top:351px"><span>Time</span></div>
<div class="po" style="left:743px;top:364px"></div>
<div class="lb" style="left:751px;top:362px"><span>Speed</span></div>
<div class="pc ar" style="left:809px;top:342px;color:#eee"></div>
<div class="n g" style="left:740px;top:396px;width:78px;height:60px"><div class="nh" style="height:10px;background:linear-gradient(to right,#5c8450 0px,#4e7246 31px,#232523 66px)"><span>Panner</span></div><div class="tri up" style="top:3px"></div></div>
<div class="pv" style="left:779px;top:418px;width:36px;height:36px;background:linear-gradient(to right,rgba(255,40,0,.25),#ff2a00),linear-gradient(#3a2a00,#10ff00);background-blend-mode:screen"></div>
<div class="pu" style="left:743px;top:408px"></div>
<div class="lb" style="left:751px;top:407px"><span>Coordinate</span></div>
<div class="pu" style="left:743px;top:420px"></div>
<div class="lb" style="left:751px;top:418px"><span>Time</span></div>
<div class="po" style="left:743px;top:430px"></div>
<div class="lb" style="left:751px;top:428px"><span>Speed</span></div>
<div class="pc ar" style="left:809px;top:408px;color:#eee"></div>
<div class="n b" style="left:836px;top:323px;width:79px;height:82px"><div class="nh" style="height:10px;background:linear-gradient(to right,#2f6d98 0px,#2a5f85 32px,#222629 67px)"><span>Texture Sample</span></div><div class="tri up" style="top:3px"></div></div>
<svg class="pv" style="left:838px;top:367px;width:36px;height:36px" width="36" height="36" viewBox="0 0 36 36" preserveAspectRatio="none"><rect width="36" height="36" fill="#efefef"/><g fill="none" stroke-linecap="butt" stroke-linejoin="miter"><path d="M5.5 0V12.5L1.5 18.5L5.5 24.5V28.5M9.5 20.5V8.5L14.5 3.5L19.5 8.5M19.5 5.5H36M12.5 12.5H25.5L30.5 17.5M25.5 12.5L36 23M36 12.5L25.5 23M18.5 16V36M23.5 17.5V36M2.5 23.5H16.5M0 30.5H9.5L14.5 35.5L19.5 30.5M27.5 30.5H36M31.5 0V6.5" stroke="#8c8c8c" stroke-width="5"/><path d="M5.5 0V12.5L1.5 18.5L5.5 24.5V28.5M9.5 20.5V8.5L14.5 3.5L19.5 8.5M19.5 5.5H36M12.5 12.5H25.5L30.5 17.5M25.5 12.5L36 23M36 12.5L25.5 23M18.5 16V36M23.5 17.5V36M2.5 23.5H16.5M0 30.5H9.5L14.5 35.5L19.5 30.5M27.5 30.5H36M31.5 0V6.5" stroke="#efefef" stroke-width="3"/><path d="M5.5 0V12.5L1.5 18.5L5.5 24.5V28.5M9.5 20.5V8.5L14.5 3.5L19.5 8.5M19.5 5.5H36M12.5 12.5H25.5L30.5 17.5M25.5 12.5L36 23M36 12.5L25.5 23M18.5 16V36M23.5 17.5V36M2.5 23.5H16.5M0 30.5H9.5L14.5 35.5L19.5 30.5M27.5 30.5H36M31.5 0V6.5" stroke="#8c8c8c" stroke-width="1"/></g><rect x="13" y="16" width="3" height="4" fill="#8c8c8c"/></svg>
<div class="pu" style="left:839px;top:336px"></div>
<div class="lb" style="left:847px;top:335px"><span>UVs</span></div>
<div class="po" style="left:839px;top:348px"></div>
<div class="lb" style="left:847px;top:346px"><span>Tex</span></div>
<div class="po" style="left:839px;top:358px"></div>
<div class="lb" style="left:847px;top:356px"><span>Apply View MipBias</span></div>
<div class="pc ar" style="left:906px;top:336px;color:#eee"></div>
<div class="lb lbr" style="left:807px;width:96px;text-align:right;top:335px"><span>RGB</span></div>
<div class="po ar" style="left:906px;top:348px;border-color:#d01010;color:#d01010"></div>
<div class="lb lbr" style="left:807px;width:96px;text-align:right;top:346px"><span>R</span></div>
<div class="po ar" style="left:906px;top:358px;border-color:#10c010;color:#10c010"></div>
<div class="lb lbr" style="left:807px;width:96px;text-align:right;top:356px"><span>G</span></div>
<div class="po ar" style="left:906px;top:368px;border-color:#1020c0;color:#1020c0"></div>
<div class="lb lbr" style="left:807px;width:96px;text-align:right;top:367px"><span>B</span></div>
<div class="po ar" style="left:906px;top:378px;border-color:#ccc;color:#ccc"></div>
<div class="lb lbr" style="left:807px;width:96px;text-align:right;top:377px"><span>A</span></div>
<div class="po ar" style="left:906px;top:390px;border-color:#ccc;color:#ccc"></div>
<div class="lb lbr" style="left:807px;width:96px;text-align:right;top:388px"><span>RGBA</span></div>
<div class="n b" style="left:836px;top:420px;width:79px;height:82px"><div class="nh" style="height:10px;background:linear-gradient(to right,#2f6d98 0px,#2a5f85 32px,#222629 67px)"><span>Texture Sample</span></div><div class="tri up" style="top:3px"></div></div>
<svg class="pv" style="left:838px;top:463px;width:36px;height:36px" width="36" height="36" viewBox="0 0 36 36" preserveAspectRatio="none"><rect width="36" height="36" fill="#efefef"/><g fill="none" stroke-linecap="butt" stroke-linejoin="miter"><path d="M5.5 0V12.5L1.5 18.5L5.5 24.5V28.5M9.5 20.5V8.5L14.5 3.5L19.5 8.5M19.5 5.5H36M12.5 12.5H25.5L30.5 17.5M25.5 12.5L36 23M36 12.5L25.5 23M18.5 16V36M23.5 17.5V36M2.5 23.5H16.5M0 30.5H9.5L14.5 35.5L19.5 30.5M27.5 30.5H36M31.5 0V6.5" stroke="#8c8c8c" stroke-width="5"/><path d="M5.5 0V12.5L1.5 18.5L5.5 24.5V28.5M9.5 20.5V8.5L14.5 3.5L19.5 8.5M19.5 5.5H36M12.5 12.5H25.5L30.5 17.5M25.5 12.5L36 23M36 12.5L25.5 23M18.5 16V36M23.5 17.5V36M2.5 23.5H16.5M0 30.5H9.5L14.5 35.5L19.5 30.5M27.5 30.5H36M31.5 0V6.5" stroke="#efefef" stroke-width="3"/><path d="M5.5 0V12.5L1.5 18.5L5.5 24.5V28.5M9.5 20.5V8.5L14.5 3.5L19.5 8.5M19.5 5.5H36M12.5 12.5H25.5L30.5 17.5M25.5 12.5L36 23M36 12.5L25.5 23M18.5 16V36M23.5 17.5V36M2.5 23.5H16.5M0 30.5H9.5L14.5 35.5L19.5 30.5M27.5 30.5H36M31.5 0V6.5" stroke="#8c8c8c" stroke-width="1"/></g><rect x="13" y="16" width="3" height="4" fill="#8c8c8c"/></svg>
<div class="pu" style="left:839px;top:434px"></div>
<div class="lb" style="left:847px;top:432px"><span>UVs</span></div>
<div class="po" style="left:839px;top:444px"></div>
<div class="lb" style="left:847px;top:443px"><span>Tex</span></div>
<div class="po" style="left:839px;top:454px"></div>
<div class="lb" style="left:847px;top:453px"><span>Apply View MipBias</span></div>
<div class="pc ar" style="left:906px;top:434px;color:#eee"></div>
<div class="lb lbr" style="left:807px;width:96px;text-align:right;top:432px"><span>RGB</span></div>
<div class="pc ar" style="left:906px;top:444px;background:#e01010;color:#e01010"></div>
<div class="lb lbr" style="left:807px;width:96px;text-align:right;top:443px"><span>R</span></div>
<div class="po ar" style="left:906px;top:454px;border-color:#10c010;color:#10c010"></div>
<div class="lb lbr" style="left:807px;width:96px;text-align:right;top:453px"><span>G</span></div>
<div class="po ar" style="left:906px;top:466px;border-color:#1020c0;color:#1020c0"></div>
<div class="lb lbr" style="left:807px;width:96px;text-align:right;top:464px"><span>B</span></div>
<div class="po ar" style="left:906px;top:476px;border-color:#ccc;color:#ccc"></div>
<div class="lb lbr" style="left:807px;width:96px;text-align:right;top:474px"><span>A</span></div>
<div class="po ar" style="left:906px;top:486px;border-color:#ccc;color:#ccc"></div>
<div class="lb lbr" style="left:807px;width:96px;text-align:right;top:485px"><span>RGBA</span></div>
<div class="n b" style="left:938px;top:251px;width:78px;height:83px"><div class="nh" style="height:10px;background:linear-gradient(to right,#2f6d98 0px,#2a5f85 31px,#222629 66px)"><span>Texture Sample</span></div><div class="tri up" style="top:3px"></div></div>
<div class="pv" style="left:940px;top:295px;width:36px;height:36px;background:#c8c8c8"></div>
<div class="pu" style="left:941px;top:264px"></div>
<div class="lb" style="left:949px;top:263px"><span>UVs</span></div>
<div class="po" style="left:941px;top:276px"></div>
<div class="lb" style="left:949px;top:274px"><span>Tex</span></div>
<div class="po" style="left:941px;top:286px"></div>
<div class="lb" style="left:949px;top:284px"><span>Apply View MipBias</span></div>
<div class="po ar" style="left:1007px;top:264px;border-color:#ccc;color:#ccc"></div>
<div class="lb lbr" style="left:908px;width:96px;text-align:right;top:263px"><span>RGB</span></div>
<div class="po ar" style="left:1007px;top:276px;border-color:#d01010;color:#d01010"></div>
<div class="lb lbr" style="left:908px;width:96px;text-align:right;top:274px"><span>R</span></div>
<div class="po ar" style="left:1007px;top:286px;border-color:#10c010;color:#10c010"></div>
<div class="lb lbr" style="left:908px;width:96px;text-align:right;top:284px"><span>G</span></div>
<div class="pc ar" style="left:1007px;top:296px;background:#1030e0;color:#1030e0"></div>
<div class="lb lbr" style="left:908px;width:96px;text-align:right;top:295px"><span>B</span></div>
<div class="po ar" style="left:1007px;top:306px;border-color:#ccc;color:#ccc"></div>
<div class="lb lbr" style="left:908px;width:96px;text-align:right;top:305px"><span>A</span></div>
<div class="po ar" style="left:1007px;top:318px;border-color:#ccc;color:#ccc"></div>
<div class="lb lbr" style="left:908px;width:96px;text-align:right;top:316px"><span>RGBA</span></div>
<div class="n o" style="left:1046px;top:299px;width:92px;height:70px"><div class="nh" style="height:17px;background:linear-gradient(to right,#8f7630 0px,#7a6830 37px,#27251f 78px)"><span>Abstract Pattern Colour</span><br><span class="ns">Param (0.214,0.756,0.87,0.0596)</span></div><div class="tri up" style="top:6px"></div></div>
<div class="pv" style="left:1048px;top:318px;width:36px;height:36px;background:#96e0ee"></div>
<div class="pc ar" style="left:1129px;top:320px;color:#eee"></div>
<div class="po ar" style="left:1129px;top:330px;border-color:#d01010;color:#d01010"></div>
<div class="po ar" style="left:1129px;top:340px;border-color:#10c010;color:#10c010"></div>
<div class="po ar" style="left:1129px;top:350px;border-color:#1020c0;color:#1020c0"></div>
<div class="po ar" style="left:1129px;top:360px;border-color:#ccc;color:#ccc"></div>
<div class="n g" style="left:944px;top:365px;width:55px;height:61px"><div class="nh" style="height:10px;background:linear-gradient(to right,#5c8450 0px,#4e7246 22px,#232523 47px)"><span>Multiply</span></div><div class="tri up" style="top:3px"></div></div>
<svg class="pv" style="left:960px;top:388px;width:36px;height:36px" width="36" height="36" viewBox="0 0 36 36" preserveAspectRatio="none"><rect width="36" height="36" fill="#f4f4f4"/><g fill="none" stroke-linecap="butt" stroke-linejoin="miter"><path d="M5.5 0V12.5L1.5 18.5L5.5 24.5V28.5M9.5 20.5V8.5L14.5 3.5L19.5 8.5M19.5 5.5H36M12.5 12.5H25.5L30.5 17.5M25.5 12.5L36 23M36 12.5L25.5 23M18.5 16V36M23.5 17.5V36M2.5 23.5H16.5M0 30.5H9.5L14.5 35.5L19.5 30.5M27.5 30.5H36M31.5 0V6.5" stroke="#1a1a1a" stroke-width="5"/><path d="M5.5 0V12.5L1.5 18.5L5.5 24.5V28.5M9.5 20.5V8.5L14.5 3.5L19.5 8.5M19.5 5.5H36M12.5 12.5H25.5L30.5 17.5M25.5 12.5L36 23M36 12.5L25.5 23M18.5 16V36M23.5 17.5V36M2.5 23.5H16.5M0 30.5H9.5L14.5 35.5L19.5 30.5M27.5 30.5H36M31.5 0V6.5" stroke="#f4f4f4" stroke-width="3"/><path d="M5.5 0V12.5L1.5 18.5L5.5 24.5V28.5M9.5 20.5V8.5L14.5 3.5L19.5 8.5M19.5 5.5H36M12.5 12.5H25.5L30.5 17.5M25.5 12.5L36 23M36 12.5L25.5 23M18.5 16V36M23.5 17.5V36M2.5 23.5H16.5M0 30.5H9.5L14.5 35.5L19.5 30.5M27.5 30.5H36M31.5 0V6.5" stroke="#1a1a1a" stroke-width="1"/></g><rect x="13" y="16" width="3" height="4" fill="#1a1a1a"/></svg>
<div class="pu" style="left:947px;top:378px"></div>
<div class="lb" style="left:955px;top:377px"><span>A</span></div>
<div class="pu" style="left:947px;top:390px"></div>
<div class="lb" style="left:955px;top:388px"><span>B</span></div>
<div class="pc ar" style="left:990px;top:378px;color:#eee"></div>
<div class="n f" style="left:1046px;top:377px;width:61px;height:32px"><div class="nh" style="height:10px;background:linear-gradient(to right,#4f7895 0px,#456884 24px,#232628 52px)"><span>MultiplyAdd</span></div></div>
<div class="pc" style="left:1049px;top:390px"></div>
<div class="lb" style="left:1057px;top:388px"><span>Base (V3) Result</span></div>
<div class="pc" style="left:1049px;top:400px"></div>
<div class="lb" style="left:1057px;top:399px"><span>Add (V3)</span></div>
<div class="pc ar" style="left:1098px;top:390px;color:#eee"></div>
<div class="n r" style="left:363px;top:583px;width:46px;height:28px"><div class="nh" style="height:17px;background:linear-gradient(to right,#a81818 0px,#8a1616 18px,#262020 39px)"><span>Scene Depth</span><br><span class="ns">Input Data</span></div><div class="tri dn" style="top:6px"></div></div>
<div class="po" style="left:366px;top:602px"></div>
<div class="lb" style="left:374px;top:601px"><span>UVs</span></div>
<div class="pc ar" style="left:400px;top:602px;background:#e01010;color:#e01010"></div>
<div class="n r" style="left:364px;top:618px;width:41px;height:27px"><div class="nh" style="height:17px;background:linear-gradient(to right,#a81818 0px,#8a1616 16px,#262020 35px)"><span>PixelDepth</span><br><span class="ns">Input Data</span></div><div class="tri dn" style="top:6px"></div></div>
<div class="pc ar" style="left:396px;top:638px;background:#e01010;color:#e01010"></div>
<div class="n g" style="left:418px;top:582px;width:37px;height:31px"><div class="nh" style="height:10px;background:linear-gradient(to right,#5c8450 0px,#4e7246 15px,#232523 31px)"><span>Subtract</span></div><div class="tri dn" style="top:3px"></div></div>
<div class="pu" style="left:421px;top:596px"></div>
<div class="lb" style="left:429px;top:594px"><span>A</span></div>
<div class="pu" style="left:421px;top:606px"></div>
<div class="lb" style="left:429px;top:604px"><span>B</span></div>
<div class="pc ar" style="left:446px;top:596px;color:#eee"></div>
<div class="n p" style="left:418px;top:624px;width:50px;height:28px"><div class="nh" style="height:17px;background:linear-gradient(to right,#4e8836 0px,#5a9244 28px,#282c26 48px)"><span>Edge FX depth</span><br><span class="ns">Param (1.28)</span></div><div class="tri dn" style="top:6px"></div></div>
<div class="pc ar" style="left:459px;top:644px;color:#eee"></div>
<div class="n r" style="left:421px;top:663px;width:45px;height:22px"><div class="nh" style="height:10px;background:linear-gradient(to right,#a81818 0px,#8a1616 18px,#262020 38px)"><span>TexCoord[0]</span></div><div class="tri dn" style="top:3px"></div></div>
<div class="pc ar" style="left:457px;top:676px;color:#eee"></div>
<div class="n g" style="left:484px;top:600px;width:30px;height:32px"><div class="nh" style="height:10px;background:linear-gradient(to right,#5c8450 0px,#4e7246 12px,#232523 26px)"><span>Divide</span></div><div class="tri dn" style="top:3px"></div></div>
<div class="pu" style="left:487px;top:614px"></div>
<div class="lb" style="left:495px;top:612px"><span>A</span></div>
<div class="pu" style="left:487px;top:624px"></div>
<div class="lb" style="left:495px;top:622px"><span>B</span></div>
<div class="pc ar" style="left:505px;top:614px;color:#eee"></div>
<div class="n g" style="left:526px;top:558px;width:70px;height:43px"><div class="nh" style="height:10px;background:linear-gradient(to right,#5c8450 0px,#4e7246 28px,#232523 60px)"><span>Clamp (Min=0) (Max=1)</span></div><div class="tri dn" style="top:3px"></div></div>
<div class="pc" style="left:529px;top:572px"></div>
<div class="po" style="left:529px;top:582px"></div>
<div class="lb" style="left:537px;top:580px"><span>Min</span></div>
<div class="po" style="left:529px;top:592px"></div>
<div class="lb" style="left:537px;top:591px"><span>Max</span></div>
<div class="pc ar" style="left:587px;top:572px;color:#eee"></div>
<div class="n g" style="left:616px;top:558px;width:25px;height:22px"><div class="nh" style="height:10px;background:linear-gradient(to right,#5c8450 0px,#4e7246 10px,#232523 21px)"><span>1-x</span></div><div class="tri dn" style="top:3px"></div></div>
<div class="pc" style="left:619px;top:572px"></div>
<div class="pc ar" style="left:632px;top:572px;color:#eee"></div>
<div class="n g" style="left:475px;top:651px;width:51px;height:43px"><div class="nh" style="height:10px;background:linear-gradient(to right,#5c8450 0px,#4e7246 20px,#232523 43px)"><span>Panner</span></div><div class="tri dn" style="top:3px"></div></div>
<div class="pu" style="left:478px;top:664px"></div>
<div class="lb" style="left:486px;top:663px"><span>Coordinate</span></div>
<div class="po" style="left:478px;top:674px"></div>
<div class="lb" style="left:486px;top:673px"><span>Time</span></div>
<div class="po" style="left:478px;top:686px"></div>
<div class="lb" style="left:486px;top:684px"><span>Speed</span></div>
<div class="pc ar" style="left:517px;top:664px;color:#eee"></div>
<div class="n b" style="left:538px;top:618px;width:79px;height:82px"><div class="nh" style="height:10px;background:linear-gradient(to right,#2f6d98 0px,#2a5f85 32px,#222629 67px)"><span>Texture Sample</span></div><div class="tri up" style="top:3px"></div></div>
<svg class="pv" style="left:540px;top:662px;width:36px;height:36px" width="36" height="36"><rect width="36" height="36" fill="#fff" filter="url(#fGrey)"/></svg>
<div class="pu" style="left:541px;top:632px"></div>
<div class="lb" style="left:549px;top:630px"><span>UVs</span></div>
<div class="po" style="left:541px;top:642px"></div>
<div class="lb" style="left:549px;top:641px"><span>Tex</span></div>
<div class="po" style="left:541px;top:652px"></div>
<div class="lb" style="left:549px;top:651px"><span>Apply View MipBias</span></div>
<div class="pc ar" style="left:608px;top:632px;color:#eee"></div>
<div class="lb lbr" style="left:509px;width:96px;text-align:right;top:630px"><span>RGB</span></div>
<div class="po ar" style="left:608px;top:642px;border-color:#d01010;color:#d01010"></div>
<div class="lb lbr" style="left:509px;width:96px;text-align:right;top:641px"><span>R</span></div>
<div class="po ar" style="left:608px;top:652px;border-color:#10c010;color:#10c010"></div>
<div class="lb lbr" style="left:509px;width:96px;text-align:right;top:651px"><span>G</span></div>
<div class="po ar" style="left:608px;top:664px;border-color:#1020c0;color:#1020c0"></div>
<div class="lb lbr" style="left:509px;width:96px;text-align:right;top:662px"><span>B</span></div>
<div class="po ar" style="left:608px;top:674px;border-color:#ccc;color:#ccc"></div>
<div class="lb lbr" style="left:509px;width:96px;text-align:right;top:672px"><span>A</span></div>
<div class="po ar" style="left:608px;top:684px;border-color:#ccc;color:#ccc"></div>
<div class="lb lbr" style="left:509px;width:96px;text-align:right;top:683px"><span>RGBA</span></div>
<div class="n g" style="left:632px;top:624px;width:64px;height:61px"><div class="nh" style="height:10px;background:linear-gradient(to right,#5c8450 0px,#4e7246 26px,#232523 54px)"><span>Power(X,0.75)</span></div><div class="tri up" style="top:3px"></div></div>
<svg class="pv" style="left:657px;top:646px;width:36px;height:36px" width="36" height="36"><rect width="36" height="36" fill="#fff" filter="url(#fGrey)"/></svg>
<div class="pc" style="left:635px;top:636px"></div>
<div class="lb" style="left:643px;top:635px"><span>Base</span></div>
<div class="po" style="left:635px;top:648px"></div>
<div class="lb" style="left:643px;top:646px"><span>Exp</span></div>
<div class="pc ar" style="left:687px;top:636px;color:#eee"></div>
<div class="n g" style="left:758px;top:629px;width:55px;height:61px"><div class="nh" style="height:10px;background:linear-gradient(to right,#5c8450 0px,#4e7246 22px,#232523 47px)"><span>Multiply</span></div><div class="tri up" style="top:3px"></div></div>
<svg class="pv" style="left:774px;top:652px;width:36px;height:36px" width="36" height="36"><rect width="36" height="36" fill="#fff" filter="url(#fGrey)"/></svg>
<div class="pu" style="left:761px;top:642px"></div>
<div class="lb" style="left:769px;top:641px"><span>A</span></div>
<div class="pu" style="left:761px;top:654px"></div>
<div class="lb" style="left:769px;top:652px"><span>B</span></div>
<div class="pc ar" style="left:804px;top:642px;color:#eee"></div>
<div class="n o" style="left:766px;top:540px;width:71px;height:69px"><div class="nh" style="height:17px;background:linear-gradient(to right,#8f7630 0px,#7a6830 28px,#27251f 60px)"><span>Edge Colours</span><br><span class="ns">Param (0.969,0.571,0,0)</span></div><div class="tri up" style="top:6px"></div></div>
<div class="pv" style="left:768px;top:558px;width:36px;height:36px;background:#ffc300"></div>
<div class="pc ar" style="left:828px;top:560px;color:#eee"></div>
<div class="po ar" style="left:828px;top:570px;border-color:#d01010;color:#d01010"></div>
<div class="po ar" style="left:828px;top:580px;border-color:#10c010;color:#10c010"></div>
<div class="po ar" style="left:828px;top:592px;border-color:#1020c0;color:#1020c0"></div>
<div class="po ar" style="left:828px;top:602px;border-color:#ccc;color:#ccc"></div>
<div class="n g" style="left:838px;top:588px;width:55px;height:61px"><div class="nh" style="height:10px;background:linear-gradient(to right,#5c8450 0px,#4e7246 22px,#232523 47px)"><span>Multiply</span></div><div class="tri up" style="top:3px"></div></div>
<svg class="pv" style="left:854px;top:611px;width:36px;height:36px" width="36" height="36"><rect width="36" height="36" fill="#fff" filter="url(#fGold)"/></svg>
<div class="pu" style="left:841px;top:602px"></div>
<div class="lb" style="left:849px;top:600px"><span>A</span></div>
<div class="pu" style="left:841px;top:612px"></div>
<div class="lb" style="left:849px;top:610px"><span>B</span></div>
<div class="pc ar" style="left:884px;top:602px;color:#eee"></div>
<div class="n r" style="left:165px;top:810px;width:40px;height:28px"><div class="nh" style="height:17px;background:linear-gradient(to right,#a81818 0px,#8a1616 16px,#262020 34px)"><span>Time</span><br><span class="ns">Input Data</span></div><div class="tri dn" style="top:6px"></div></div>
<div class="pc ar" style="left:196px;top:830px;color:#eee"></div>
<div class="n r" style="left:231px;top:744px;width:43px;height:21px"><div class="nh" style="height:10px;background:linear-gradient(to right,#a81818 0px,#8a1616 17px,#262020 37px)"><span>TexCoord[0]</span></div><div class="tri dn" style="top:3px"></div></div>
<div class="pc ar" style="left:265px;top:758px;color:#eee"></div>
<div class="n g" style="left:231px;top:774px;width:40px;height:61px"><div class="nh" style="height:10px;background:linear-gradient(to right,#5c8450 0px,#4e7246 16px,#232523 34px)"><span>Sine</span></div><div class="tri up" style="top:3px"></div></div>
<div class="pv" style="left:232px;top:797px;width:36px;height:36px;background:#000"></div>
<div class="pc" style="left:234px;top:788px"></div>
<div class="pc ar" style="left:262px;top:788px;color:#eee"></div>
<div class="n g" style="left:291px;top:762px;width:78px;height:61px"><div class="nh" style="height:10px;background:linear-gradient(to right,#5c8450 0px,#4e7246 31px,#232523 66px)"><span>Panner</span></div><div class="tri up" style="top:3px"></div></div>
<div class="pv" style="left:330px;top:785px;width:36px;height:36px;background:linear-gradient(#000 80%,#0a6a0a 82%,#0f8a0f)"></div>
<div class="pu" style="left:294px;top:776px"></div>
<div class="lb" style="left:302px;top:774px"><span>Coordinate</span></div>
<div class="pu" style="left:294px;top:786px"></div>
<div class="lb" style="left:302px;top:784px"><span>Time</span></div>
<div class="po" style="left:294px;top:796px"></div>
<div class="lb" style="left:302px;top:795px"><span>Speed</span></div>
<div class="pc ar" style="left:360px;top:776px;color:#eee"></div>
<div class="n g" style="left:231px;top:840px;width:40px;height:61px"><div class="nh" style="height:10px;background:linear-gradient(to right,#5c8450 0px,#4e7246 16px,#232523 34px)"><span>Sine</span></div><div class="tri up" style="top:3px"></div></div>
<div class="pv" style="left:232px;top:863px;width:36px;height:36px;background:#bb0000"></div>
<div class="pc" style="left:234px;top:854px"></div>
<div class="pc ar" style="left:262px;top:854px;color:#eee"></div>
<div class="n g" style="left:291px;top:840px;width:42px;height:21px"><div class="nh" style="height:10px;background:linear-gradient(to right,#5c8450 0px,#4e7246 17px,#232523 36px)"><span>Mask ( R B )</span></div><div class="tri dn" style="top:3px"></div></div>
<div class="pc" style="left:294px;top:854px"></div>
<div class="pc ar" style="left:324px;top:854px;color:#eee"></div>
<div class="n g" style="left:351px;top:840px;width:78px;height:61px"><div class="nh" style="height:10px;background:linear-gradient(to right,#5c8450 0px,#4e7246 31px,#232523 66px)"><span>Rotator</span></div><div class="tri up" style="top:3px"></div></div>
<div class="pv" style="left:390px;top:863px;width:36px;height:36px;background:#007800"></div>
<div class="pu" style="left:354px;top:854px"></div>
<div class="lb" style="left:362px;top:852px"><span>Coordinate</span></div>
<div class="po" style="left:354px;top:864px"></div>
<div class="lb" style="left:362px;top:862px"><span>Time</span></div>
<div class="pc ar" style="left:420px;top:854px;color:#eee"></div>
<div class="n g" style="left:297px;top:900px;width:26px;height:22px"><div class="nh" style="height:10px;background:linear-gradient(to right,#5c8450 0px,#4e7246 10px,#232523 22px)"><span>Sine</span></div><div class="tri dn" style="top:3px"></div></div>
<div class="pc" style="left:300px;top:914px"></div>
<div class="pc ar" style="left:314px;top:914px;color:#eee"></div>
<div class="n g" style="left:297px;top:930px;width:26px;height:22px"><div class="nh" style="height:10px;background:linear-gradient(to right,#5c8450 0px,#4e7246 10px,#232523 22px)"><span>Sine</span></div><div class="tri dn" style="top:3px"></div></div>
<div class="pc" style="left:300px;top:944px"></div>
<div class="pc ar" style="left:314px;top:944px;color:#eee"></div>
<div class="n r" style="left:231px;top:942px;width:40px;height:28px"><div class="nh" style="height:17px;background:linear-gradient(to right,#a81818 0px,#8a1616 16px,#262020 34px)"><span>Time</span><br><span class="ns">Input Data</span></div><div class="tri dn" style="top:6px"></div></div>
<div class="pc ar" style="left:262px;top:962px;color:#eee"></div>
<div class="n g" style="left:291px;top:972px;width:32px;height:22px"><div class="nh" style="height:10px;background:linear-gradient(to right,#5c8450 0px,#4e7246 13px,#232523 27px)"><span>Cosine</span></div><div class="tri dn" style="top:3px"></div></div>
<div class="pc" style="left:294px;top:986px"></div>
<div class="pc ar" style="left:314px;top:986px;color:#eee"></div>
<div class="n g" style="left:357px;top:912px;width:55px;height:62px"><div class="nh" style="height:10px;background:linear-gradient(to right,#5c8450 0px,#4e7246 22px,#232523 47px)"><span>Multiply</span></div><div class="tri up" style="top:3px"></div></div>
<div class="pv" style="left:373px;top:935px;width:36px;height:36px;background:#a80000"></div>
<div class="pu" style="left:360px;top:926px"></div>
<div class="lb" style="left:368px;top:924px"><span>A</span></div>
<div class="pu" style="left:360px;top:936px"></div>
<div class="lb" style="left:368px;top:934px"><span>B</span></div>
<div class="pc ar" style="left:403px;top:926px;color:#eee"></div>
<div class="n g" style="left:429px;top:954px;width:27px;height:31px"><div class="nh" style="height:10px;background:linear-gradient(to right,#5c8450 0px,#4e7246 11px,#232523 23px)"><span>Add</span></div><div class="tri dn" style="top:3px"></div></div>
<div class="pu" style="left:432px;top:968px"></div>
<div class="lb" style="left:440px;top:966px"><span>A</span></div>
<div class="pu" style="left:432px;top:978px"></div>
<div class="lb" style="left:440px;top:976px"><span>B</span></div>
<div class="pc ar" style="left:447px;top:968px;color:#eee"></div>
<div class="n g" style="left:441px;top:810px;width:55px;height:61px"><div class="nh" style="height:10px;background:linear-gradient(to right,#5c8450 0px,#4e7246 22px,#232523 47px)"><span>Multiply</span></div><div class="tri up" style="top:3px"></div></div>
<div class="pv" style="left:457px;top:833px;width:36px;height:36px;background:linear-gradient(#ff0000 65%,#ff3300 90%,#ff5a00)"></div>
<div class="pu" style="left:444px;top:824px"></div>
<div class="lb" style="left:452px;top:822px"><span>A</span></div>
<div class="pu" style="left:444px;top:834px"></div>
<div class="lb" style="left:452px;top:832px"><span>B</span></div>
<div class="pc ar" style="left:487px;top:824px;color:#eee"></div>
<div class="n b" style="left:513px;top:810px;width:79px;height:83px"><div class="nh" style="height:10px;background:linear-gradient(to right,#2f6d98 0px,#2a5f85 32px,#222629 67px)"><span>Texture Sample</span></div><div class="tri up" style="top:3px"></div></div>
<svg class="pv" style="left:515px;top:854px;width:36px;height:36px" width="36" height="36"><rect width="36" height="36" fill="#fff" filter="url(#fCloudW)"/></svg>
<div class="pu" style="left:516px;top:824px"></div>
<div class="lb" style="left:524px;top:822px"><span>UVs</span></div>
<div class="po" style="left:516px;top:834px"></div>
<div class="lb" style="left:524px;top:833px"><span>Tex</span></div>
<div class="po" style="left:516px;top:844px"></div>
<div class="lb" style="left:524px;top:843px"><span>Apply View MipBias</span></div>
<div class="pc ar" style="left:583px;top:824px;color:#eee"></div>
<div class="lb lbr" style="left:484px;width:96px;text-align:right;top:822px"><span>RGB</span></div>
<div class="po ar" style="left:583px;top:834px;border-color:#d01010;color:#d01010"></div>
<div class="lb lbr" style="left:484px;width:96px;text-align:right;top:833px"><span>R</span></div>
<div class="po ar" style="left:583px;top:844px;border-color:#10c010;color:#10c010"></div>
<div class="lb lbr" style="left:484px;width:96px;text-align:right;top:843px"><span>G</span></div>
<div class="po ar" style="left:583px;top:856px;border-color:#1020c0;color:#1020c0"></div>
<div class="lb lbr" style="left:484px;width:96px;text-align:right;top:854px"><span>B</span></div>
<div class="po ar" style="left:583px;top:866px;border-color:#ccc;color:#ccc"></div>
<div class="lb lbr" style="left:484px;width:96px;text-align:right;top:864px"><span>A</span></div>
<div class="po ar" style="left:583px;top:876px;border-color:#ccc;color:#ccc"></div>
<div class="lb lbr" style="left:484px;width:96px;text-align:right;top:875px"><span>RGBA</span></div>
<div class="n g" style="left:465px;top:888px;width:40px;height:62px"><div class="nh" style="height:10px;background:linear-gradient(to right,#5c8450 0px,#4e7246 16px,#232523 34px)"><span>Abs</span></div><div class="tri up" style="top:3px"></div></div>
<div class="pv" style="left:466px;top:911px;width:36px;height:36px;background:#cc0000"></div>
<div class="pc" style="left:468px;top:902px"></div>
<div class="pc ar" style="left:496px;top:902px;color:#eee"></div>
<div class="n g" style="left:603px;top:876px;width:55px;height:62px"><div class="nh" style="height:10px;background:linear-gradient(to right,#5c8450 0px,#4e7246 22px,#232523 47px)"><span>Add</span></div><div class="tri up" style="top:3px"></div></div>
<div class="pv" style="left:619px;top:899px;width:36px;height:36px;background:#ffffff"></div>
<div class="pu" style="left:606px;top:890px"></div>
<div class="lb" style="left:614px;top:888px"><span>A</span></div>
<div class="pu" style="left:606px;top:900px"></div>
<div class="lb" style="left:614px;top:899px"><span>B</span></div>
<div class="pc ar" style="left:649px;top:890px;color:#eee"></div>
<div class="n r" style="left:674px;top:923px;width:44px;height:22px"><div class="nh" style="height:10px;background:linear-gradient(to right,#a81818 0px,#8a1616 18px,#262020 37px)"><span>TexCoord[0]</span></div><div class="tri dn" style="top:3px"></div></div>
<div class="pc ar" style="left:709px;top:936px;color:#eee"></div>
<div class="n g" style="left:728px;top:875px;width:50px;height:42px"><div class="nh" style="height:10px;background:linear-gradient(to right,#5c8450 0px,#4e7246 20px,#232523 42px)"><span>Panner</span></div><div class="tri dn" style="top:3px"></div></div>
<div class="pu" style="left:731px;top:888px"></div>
<div class="lb" style="left:739px;top:887px"><span>Coordinate</span></div>
<div class="po" style="left:731px;top:900px"></div>
<div class="lb" style="left:739px;top:898px"><span>Time</span></div>
<div class="po" style="left:731px;top:910px"></div>
<div class="lb" style="left:739px;top:908px"><span>Speed</span></div>
<div class="pc ar" style="left:769px;top:888px;color:#eee"></div>
<div class="n g" style="left:728px;top:960px;width:50px;height:41px"><div class="nh" style="height:10px;background:linear-gradient(to right,#5c8450 0px,#4e7246 20px,#232523 42px)"><span>Panner</span></div><div class="tri dn" style="top:3px"></div></div>
<div class="pu" style="left:731px;top:972px"></div>
<div class="lb" style="left:739px;top:971px"><span>Coordinate</span></div>
<div class="po" style="left:731px;top:984px"></div>
<div class="lb" style="left:739px;top:982px"><span>Time</span></div>
<div class="po" style="left:731px;top:994px"></div>
<div class="lb" style="left:739px;top:992px"><span>Speed</span></div>
<div class="pc ar" style="left:769px;top:972px;color:#eee"></div>
<div class="n b" style="left:795px;top:840px;width:79px;height:83px"><div class="nh" style="height:10px;background:linear-gradient(to right,#2f6d98 0px,#2a5f85 32px,#222629 67px)"><span>Texture Sample</span></div><div class="tri up" style="top:3px"></div></div>
<svg class="pv" style="left:797px;top:884px;width:36px;height:36px" width="36" height="36"><rect width="36" height="36" fill="#fff" filter="url(#fCloud)"/></svg>
<div class="pu" style="left:798px;top:854px"></div>
<div class="lb" style="left:806px;top:852px"><span>UVs</span></div>
<div class="po" style="left:798px;top:864px"></div>
<div class="lb" style="left:806px;top:863px"><span>Tex</span></div>
<div class="po" style="left:798px;top:874px"></div>
<div class="lb" style="left:806px;top:873px"><span>Apply View MipBias</span></div>
<div class="pc ar" style="left:865px;top:854px;color:#eee"></div>
<div class="lb lbr" style="left:766px;width:96px;text-align:right;top:852px"><span>RGB</span></div>
<div class="pc ar" style="left:865px;top:864px;background:#e01010;color:#e01010"></div>
<div class="lb lbr" style="left:766px;width:96px;text-align:right;top:863px"><span>R</span></div>
<div class="po ar" style="left:865px;top:874px;border-color:#10c010;color:#10c010"></div>
<div class="lb lbr" style="left:766px;width:96px;text-align:right;top:873px"><span>G</span></div>
<div class="po ar" style="left:865px;top:886px;border-color:#1020c0;color:#1020c0"></div>
<div class="lb lbr" style="left:766px;width:96px;text-align:right;top:884px"><span>B</span></div>
<div class="po ar" style="left:865px;top:896px;border-color:#ccc;color:#ccc"></div>
<div class="lb lbr" style="left:766px;width:96px;text-align:right;top:894px"><span>A</span></div>
<div class="po ar" style="left:865px;top:906px;border-color:#ccc;color:#ccc"></div>
<div class="lb lbr" style="left:766px;width:96px;text-align:right;top:905px"><span>RGBA</span></div>
<div class="n b" style="left:794px;top:929px;width:79px;height:83px"><div class="nh" style="height:10px;background:linear-gradient(to right,#2f6d98 0px,#2a5f85 32px,#222629 67px)"><span>Texture Sample</span></div><div class="tri up" style="top:3px"></div></div>
<svg class="pv" style="left:796px;top:973px;width:36px;height:36px" width="36" height="36"><rect width="36" height="36" fill="#fff" filter="url(#fCloud)"/></svg>
<div class="pu" style="left:797px;top:942px"></div>
<div class="lb" style="left:805px;top:941px"><span>UVs</span></div>
<div class="po" style="left:797px;top:954px"></div>
<div class="lb" style="left:805px;top:952px"><span>Tex</span></div>
<div class="po" style="left:797px;top:964px"></div>
<div class="lb" style="left:805px;top:962px"><span>Apply View MipBias</span></div>
<div class="po ar" style="left:864px;top:942px;border-color:#ccc;color:#ccc"></div>
<div class="lb lbr" style="left:765px;width:96px;text-align:right;top:941px"><span>RGB</span></div>
<div class="pc ar" style="left:864px;top:954px;background:#e01010;color:#e01010"></div>
<div class="lb lbr" style="left:765px;width:96px;text-align:right;top:952px"><span>R</span></div>
<div class="po ar" style="left:864px;top:964px;border-color:#10c010;color:#10c010"></div>
<div class="lb lbr" style="left:765px;width:96px;text-align:right;top:962px"><span>G</span></div>
<div class="po ar" style="left:864px;top:974px;border-color:#1020c0;color:#1020c0"></div>
<div class="lb lbr" style="left:765px;width:96px;text-align:right;top:973px"><span>B</span></div>
<div class="po ar" style="left:864px;top:984px;border-color:#ccc;color:#ccc"></div>
<div class="lb lbr" style="left:765px;width:96px;text-align:right;top:983px"><span>A</span></div>
<div class="po ar" style="left:864px;top:996px;border-color:#ccc;color:#ccc"></div>
<div class="lb lbr" style="left:765px;width:96px;text-align:right;top:994px"><span>RGBA</span></div>
<div class="n g" style="left:950px;top:857px;width:35px;height:32px"><div class="nh" style="height:10px;background:linear-gradient(to right,#5c8450 0px,#4e7246 14px,#232523 30px)"><span>Multiply</span></div><div class="tri dn" style="top:3px"></div></div>
<div class="pu" style="left:953px;top:870px"></div>
<div class="lb" style="left:961px;top:869px"><span>A</span></div>
<div class="pu" style="left:953px;top:882px"></div>
<div class="lb" style="left:961px;top:880px"><span>B</span></div>
<div class="pc ar" style="left:976px;top:870px;color:#eee"></div>
<div class="n r" style="left:921px;top:918px;width:40px;height:28px"><div class="nh" style="height:17px;background:linear-gradient(to right,#a81818 0px,#8a1616 16px,#262020 34px)"><span>Time</span><br><span class="ns">Input Data</span></div><div class="tri dn" style="top:6px"></div></div>
<div class="pc ar" style="left:952px;top:938px;color:#eee"></div>
<div class="n g" style="left:975px;top:918px;width:34px;height:32px"><div class="nh" style="height:10px;background:linear-gradient(to right,#5c8450 0px,#4e7246 14px,#232523 29px)"><span>Multiply</span></div><div class="tri dn" style="top:3px"></div></div>
<div class="pu" style="left:978px;top:932px"></div>
<div class="lb" style="left:986px;top:930px"><span>A</span></div>
<div class="pu" style="left:978px;top:942px"></div>
<div class="lb" style="left:986px;top:940px"><span>B</span></div>
<div class="pc ar" style="left:1000px;top:932px;color:#eee"></div>
<div class="n p" style="left:903px;top:960px;width:57px;height:28px"><div class="nh" style="height:17px;background:linear-gradient(to right,#4e8836 0px,#5a9244 31px,#282c26 55px)"><span>Cloud Frac speed</span><br><span class="ns">Param (0.2)</span></div><div class="tri dn" style="top:6px"></div></div>
<div class="pc ar" style="left:951px;top:980px;color:#eee"></div>
<div class="n g" style="left:1022px;top:875px;width:55px;height:62px"><div class="nh" style="height:10px;background:linear-gradient(to right,#5c8450 0px,#4e7246 22px,#232523 47px)"><span>Add</span></div><div class="tri up" style="top:3px"></div></div>
<div class="pv" style="left:1038px;top:898px;width:36px;height:36px;background:#ff0000"></div>
<div class="pu" style="left:1025px;top:888px"></div>
<div class="lb" style="left:1033px;top:887px"><span>A</span></div>
<div class="pu" style="left:1025px;top:900px"></div>
<div class="lb" style="left:1033px;top:898px"><span>B</span></div>
<div class="pc ar" style="left:1068px;top:888px;color:#eee"></div>
<div class="n g" style="left:1082px;top:851px;width:40px;height:62px"><div class="nh" style="height:10px;background:linear-gradient(to right,#5c8450 0px,#4e7246 16px,#232523 34px)"><span>Frac</span></div><div class="tri up" style="top:3px"></div></div>
<svg class="pv" style="left:1083px;top:874px;width:36px;height:36px" width="36" height="36"><rect width="36" height="36" fill="#fff" filter="url(#fRed)"/></svg>
<div class="pc" style="left:1085px;top:864px"></div>
<div class="pc ar" style="left:1113px;top:864px;color:#eee"></div>
<div class="n g" style="left:1148px;top:893px;width:78px;height:62px"><div class="nh" style="height:10px;background:linear-gradient(to right,#5c8450 0px,#4e7246 31px,#232523 66px)"><span>Clamp (Min=0.3) (Max=0.8)</span></div><div class="tri up" style="top:3px"></div></div>
<svg class="pv" style="left:1187px;top:916px;width:36px;height:36px" width="36" height="36"><rect width="36" height="36" fill="#fff" filter="url(#fRed)"/></svg>
<div class="pc" style="left:1151px;top:906px"></div>
<div class="po" style="left:1151px;top:918px"></div>
<div class="lb" style="left:1159px;top:916px"><span>Min</span></div>
<div class="po" style="left:1151px;top:928px"></div>
<div class="lb" style="left:1159px;top:926px"><span>Max</span></div>
<div class="pc ar" style="left:1217px;top:906px;color:#eee"></div>
<div class="n g" style="left:999px;top:696px;width:55px;height:61px"><div class="nh" style="height:10px;background:linear-gradient(to right,#5c8450 0px,#4e7246 22px,#232523 47px)"><span>Multiply</span></div><div class="tri up" style="top:3px"></div></div>
<div class="pv" style="left:1015px;top:719px;width:36px;height:36px;background:#ffffff"></div>
<div class="pu" style="left:1002px;top:710px"></div>
<div class="lb" style="left:1010px;top:708px"><span>A</span></div>
<div class="pu" style="left:1002px;top:720px"></div>
<div class="lb" style="left:1010px;top:718px"><span>B</span></div>
<div class="pc ar" style="left:1045px;top:710px;color:#eee"></div>
<div class="n g" style="left:1065px;top:696px;width:63px;height:61px"><div class="nh" style="height:10px;background:linear-gradient(to right,#5c8450 0px,#4e7246 25px,#232523 54px)"><span>Power(X,1.982)</span></div><div class="tri up" style="top:3px"></div></div>
<div class="pv" style="left:1090px;top:719px;width:36px;height:36px;background:#ffffff"></div>
<div class="pc" style="left:1068px;top:710px"></div>
<div class="lb" style="left:1076px;top:708px"><span>Base</span></div>
<div class="po" style="left:1068px;top:720px"></div>
<div class="lb" style="left:1076px;top:718px"><span>Exp</span></div>
<div class="pc ar" style="left:1119px;top:710px;color:#eee"></div>
<div class="n g" style="left:1143px;top:696px;width:40px;height:61px"><div class="nh" style="height:10px;background:linear-gradient(to right,#5c8450 0px,#4e7246 16px,#232523 34px)"><span>Frac</span></div><div class="tri up" style="top:3px"></div></div>
<svg class="pv" style="left:1144px;top:719px;width:36px;height:36px" width="36" height="36"><rect width="36" height="36" fill="#fff" filter="url(#fCol)"/></svg>
<div class="pc" style="left:1146px;top:710px"></div>
<div class="pc ar" style="left:1174px;top:710px;color:#eee"></div>
<div class="n p" style="left:926px;top:767px;width:53px;height:28px"><div class="nh" style="height:17px;background:linear-gradient(to right,#4e8836 0px,#5a9244 29px,#282c26 51px)"><span>Static strength</span><br><span class="ns">Param (3.066)</span></div><div class="tri dn" style="top:6px"></div></div>
<div class="pc ar" style="left:970px;top:786px;color:#eee"></div>
<div class="n g" style="left:1202px;top:684px;width:55px;height:61px"><div class="nh" style="height:10px;background:linear-gradient(to right,#5c8450 0px,#4e7246 22px,#232523 47px)"><span>Multiply</span></div><div class="tri up" style="top:3px"></div></div>
<svg class="pv" style="left:1218px;top:706px;width:36px;height:36px" width="36" height="36"><rect width="36" height="36" fill="#fff" filter="url(#fTeal)"/></svg>
<div class="pu" style="left:1205px;top:696px"></div>
<div class="lb" style="left:1213px;top:695px"><span>A</span></div>
<div class="pu" style="left:1205px;top:708px"></div>
<div class="lb" style="left:1213px;top:706px"><span>B</span></div>
<div class="pc ar" style="left:1248px;top:696px;color:#eee"></div>
<div class="n g" style="left:1268px;top:744px;width:55px;height:61px"><div class="nh" style="height:10px;background:linear-gradient(to right,#5c8450 0px,#4e7246 22px,#232523 47px)"><span>Multiply</span></div><div class="tri up" style="top:3px"></div></div>
<svg class="pv" style="left:1284px;top:766px;width:36px;height:36px" width="36" height="36"><rect width="36" height="36" fill="#fff" filter="url(#fTeal2)"/></svg>
<div class="pu" style="left:1271px;top:756px"></div>
<div class="lb" style="left:1279px;top:755px"><span>A</span></div>
<div class="pu" style="left:1271px;top:768px"></div>
<div class="lb" style="left:1279px;top:766px"><span>B</span></div>
<div class="pc ar" style="left:1314px;top:756px;color:#eee"></div>
<div class="n g" style="left:1280px;top:545px;width:65px;height:62px"><div class="nh" style="height:10px;background:linear-gradient(to right,#5c8450 0px,#4e7246 26px,#232523 55px)"><span>Lerp</span></div><div class="tri up" style="top:3px"></div></div>
<svg class="pv" style="left:1306px;top:568px;width:36px;height:36px" width="36" height="36" viewBox="0 0 36 36" preserveAspectRatio="none"><rect width="36" height="36" fill="#80bcc6"/><g fill="none" stroke-linecap="butt" stroke-linejoin="miter"><path d="M5.5 0V12.5L1.5 18.5L5.5 24.5V28.5M9.5 20.5V8.5L14.5 3.5L19.5 8.5M19.5 5.5H36M12.5 12.5H25.5L30.5 17.5M25.5 12.5L36 23M36 12.5L25.5 23M18.5 16V36M23.5 17.5V36M2.5 23.5H16.5M0 30.5H9.5L14.5 35.5L19.5 30.5M27.5 30.5H36M31.5 0V6.5" stroke="#b8a06a" stroke-width="5"/><path d="M5.5 0V12.5L1.5 18.5L5.5 24.5V28.5M9.5 20.5V8.5L14.5 3.5L19.5 8.5M19.5 5.5H36M12.5 12.5H25.5L30.5 17.5M25.5 12.5L36 23M36 12.5L25.5 23M18.5 16V36M23.5 17.5V36M2.5 23.5H16.5M0 30.5H9.5L14.5 35.5L19.5 30.5M27.5 30.5H36M31.5 0V6.5" stroke="#80bcc6" stroke-width="3"/><path d="M5.5 0V12.5L1.5 18.5L5.5 24.5V28.5M9.5 20.5V8.5L14.5 3.5L19.5 8.5M19.5 5.5H36M12.5 12.5H25.5L30.5 17.5M25.5 12.5L36 23M36 12.5L25.5 23M18.5 16V36M23.5 17.5V36M2.5 23.5H16.5M0 30.5H9.5L14.5 35.5L19.5 30.5M27.5 30.5H36M31.5 0V6.5" stroke="#b8a06a" stroke-width="1"/></g><rect x="13" y="16" width="3" height="4" fill="#b8a06a"/></svg>
<div class="pu" style="left:1283px;top:558px"></div>
<div class="lb" style="left:1291px;top:557px"><span>A</span></div>
<div class="pu" style="left:1283px;top:570px"></div>
<div class="lb" style="left:1291px;top:568px"><span>B</span></div>
<div class="pu" style="left:1283px;top:580px"></div>
<div class="lb" style="left:1291px;top:578px"><span>Alpha</span></div>
<div class="pc ar" style="left:1336px;top:558px;color:#eee"></div>
<div class="n g" style="left:1190px;top:594px;width:55px;height:61px"><div class="nh" style="height:10px;background:linear-gradient(to right,#5c8450 0px,#4e7246 22px,#232523 47px)"><span>Multiply</span></div><div class="tri up" style="top:3px"></div></div>
<svg class="pv" style="left:1206px;top:616px;width:36px;height:36px" width="36" height="36" viewBox="0 0 36 36" preserveAspectRatio="none"><rect width="36" height="36" fill="#95dbee"/><g fill="none" stroke-linecap="butt" stroke-linejoin="miter"><path d="M5.5 0V12.5L1.5 18.5L5.5 24.5V28.5M9.5 20.5V8.5L14.5 3.5L19.5 8.5M19.5 5.5H36M12.5 12.5H25.5L30.5 17.5M25.5 12.5L36 23M36 12.5L25.5 23M18.5 16V36M23.5 17.5V36M2.5 23.5H16.5M0 30.5H9.5L14.5 35.5L19.5 30.5M27.5 30.5H36M31.5 0V6.5" stroke="#66b4cc" stroke-width="5"/><path d="M5.5 0V12.5L1.5 18.5L5.5 24.5V28.5M9.5 20.5V8.5L14.5 3.5L19.5 8.5M19.5 5.5H36M12.5 12.5H25.5L30.5 17.5M25.5 12.5L36 23M36 12.5L25.5 23M18.5 16V36M23.5 17.5V36M2.5 23.5H16.5M0 30.5H9.5L14.5 35.5L19.5 30.5M27.5 30.5H36M31.5 0V6.5" stroke="#95dbee" stroke-width="3"/><path d="M5.5 0V12.5L1.5 18.5L5.5 24.5V28.5M9.5 20.5V8.5L14.5 3.5L19.5 8.5M19.5 5.5H36M12.5 12.5H25.5L30.5 17.5M25.5 12.5L36 23M36 12.5L25.5 23M18.5 16V36M23.5 17.5V36M2.5 23.5H16.5M0 30.5H9.5L14.5 35.5L19.5 30.5M27.5 30.5H36M31.5 0V6.5" stroke="#66b4cc" stroke-width="1"/></g><rect x="13" y="16" width="3" height="4" fill="#66b4cc"/></svg>
<div class="pu" style="left:1193px;top:606px"></div>
<div class="lb" style="left:1201px;top:605px"><span>A</span></div>
<div class="pu" style="left:1193px;top:618px"></div>
<div class="lb" style="left:1201px;top:616px"><span>B</span></div>
<div class="pc ar" style="left:1236px;top:606px;color:#eee"></div>
<div class="n p" style="left:1250px;top:624px;width:60px;height:28px"><div class="nh" style="height:17px;background:linear-gradient(to right,#4e8836 0px,#5a9244 33px,#282c26 58px)"><span>Emissive strength</span><br><span class="ns">Param (0.5)</span></div><div class="tri dn" style="top:6px"></div></div>
<div class="pc ar" style="left:1301px;top:642px;color:#eee"></div>
<div class="n g" style="left:1364px;top:594px;width:64px;height:61px"><div class="nh" style="height:10px;background:linear-gradient(to right,#5c8450 0px,#4e7246 26px,#232523 54px)"><span>Power</span></div><div class="tri up" style="top:3px"></div></div>
<svg class="pv" style="left:1389px;top:616px;width:36px;height:36px" width="36" height="36" viewBox="0 0 36 36" preserveAspectRatio="none"><rect width="36" height="36" fill="#d8e8ea"/><g fill="none" stroke-linecap="butt" stroke-linejoin="miter"><path d="M5.5 0V12.5L1.5 18.5L5.5 24.5V28.5M9.5 20.5V8.5L14.5 3.5L19.5 8.5M19.5 5.5H36M12.5 12.5H25.5L30.5 17.5M25.5 12.5L36 23M36 12.5L25.5 23M18.5 16V36M23.5 17.5V36M2.5 23.5H16.5M0 30.5H9.5L14.5 35.5L19.5 30.5M27.5 30.5H36M31.5 0V6.5" stroke="#aebcae" stroke-width="5"/><path d="M5.5 0V12.5L1.5 18.5L5.5 24.5V28.5M9.5 20.5V8.5L14.5 3.5L19.5 8.5M19.5 5.5H36M12.5 12.5H25.5L30.5 17.5M25.5 12.5L36 23M36 12.5L25.5 23M18.5 16V36M23.5 17.5V36M2.5 23.5H16.5M0 30.5H9.5L14.5 35.5L19.5 30.5M27.5 30.5H36M31.5 0V6.5" stroke="#d8e8ea" stroke-width="3"/><path d="M5.5 0V12.5L1.5 18.5L5.5 24.5V28.5M9.5 20.5V8.5L14.5 3.5L19.5 8.5M19.5 5.5H36M12.5 12.5H25.5L30.5 17.5M25.5 12.5L36 23M36 12.5L25.5 23M18.5 16V36M23.5 17.5V36M2.5 23.5H16.5M0 30.5H9.5L14.5 35.5L19.5 30.5M27.5 30.5H36M31.5 0V6.5" stroke="#aebcae" stroke-width="1"/></g><rect x="13" y="16" width="3" height="4" fill="#aebcae"/></svg>
<div class="pc" style="left:1367px;top:606px"></div>
<div class="lb" style="left:1375px;top:605px"><span>Base</span></div>
<div class="pu" style="left:1367px;top:618px"></div>
<div class="lb" style="left:1375px;top:616px"><span>Exp</span></div>
<div class="pc ar" style="left:1419px;top:606px;color:#eee"></div>
<div class="n g" style="left:1562px;top:654px;width:54px;height:61px"><div class="nh" style="height:10px;background:linear-gradient(to right,#5c8450 0px,#4e7246 22px,#232523 46px)"><span>Multiply</span></div><div class="tri up" style="top:3px"></div></div>
<svg class="pv" style="left:1578px;top:676px;width:36px;height:36px" width="36" height="36"><rect width="36" height="36" fill="#fff" filter="url(#fTeal)"/></svg>
<div class="pu" style="left:1565px;top:666px"></div>
<div class="lb" style="left:1573px;top:665px"><span>A</span></div>
<div class="pu" style="left:1565px;top:678px"></div>
<div class="lb" style="left:1573px;top:676px"><span>B</span></div>
<div class="pc ar" style="left:1607px;top:666px;color:#eee"></div>
<div class="n g" style="left:1393px;top:745px;width:65px;height:62px"><div class="nh" style="height:10px;background:linear-gradient(to right,#5c8450 0px,#4e7246 26px,#232523 55px)"><span>Lerp</span></div><div class="tri up" style="top:3px"></div></div>
<svg class="pv" style="left:1418px;top:768px;width:36px;height:36px" width="36" height="36"><rect width="36" height="36" fill="#fff" filter="url(#fTeal)"/></svg>
<div class="pu" style="left:1396px;top:758px"></div>
<div class="lb" style="left:1404px;top:757px"><span>A</span></div>
<div class="pu" style="left:1396px;top:770px"></div>
<div class="lb" style="left:1404px;top:768px"><span>B</span></div>
<div class="pu" style="left:1396px;top:780px"></div>
<div class="lb" style="left:1404px;top:778px"><span>Alpha</span></div>
<div class="pc ar" style="left:1449px;top:758px;color:#eee"></div>
<div class="n f" style="left:1520px;top:743px;width:62px;height:32px"><div class="nh" style="height:10px;background:linear-gradient(to right,#4f7895 0px,#456884 25px,#232628 53px)"><span>Blend_Screen</span></div></div>
<div class="pc" style="left:1523px;top:756px"></div>
<div class="lb" style="left:1531px;top:754px"><span>Blend (V3) Result</span></div>
<div class="pc" style="left:1523px;top:766px"></div>
<div class="lb" style="left:1531px;top:765px"><span>Base (V3)</span></div>
<div class="pc ar" style="left:1573px;top:756px;color:#eee"></div>
<div class="n p" style="left:1514px;top:785px;width:44px;height:29px"><div class="nh" style="height:17px;background:linear-gradient(to right,#4e8836 0px,#5a9244 24px,#282c26 43px)"><span>Opacity</span><br><span class="ns">Param (0.1)</span></div><div class="tri dn" style="top:6px"></div></div>
<div class="pc ar" style="left:1549px;top:804px;color:#eee"></div>
<div class="n g" style="left:1573px;top:776px;width:35px;height:32px"><div class="nh" style="height:10px;background:linear-gradient(to right,#5c8450 0px,#4e7246 14px,#232523 30px)"><span>Multiply</span></div><div class="tri dn" style="top:3px"></div></div>
<div class="pu" style="left:1576px;top:790px"></div>
<div class="lb" style="left:1584px;top:788px"><span>A</span></div>
<div class="pu" style="left:1576px;top:800px"></div>
<div class="lb" style="left:1584px;top:798px"><span>B</span></div>
<div class="pc ar" style="left:1599px;top:790px;color:#eee"></div>
<div class="n g" style="left:1334px;top:863px;width:55px;height:62px"><div class="nh" style="height:10px;background:linear-gradient(to right,#5c8450 0px,#4e7246 22px,#232523 47px)"><span>Multiply</span></div><div class="tri up" style="top:3px"></div></div>
<svg class="pv" style="left:1350px;top:886px;width:36px;height:36px" width="36" height="36"><rect width="36" height="36" fill="#fff" filter="url(#fDark)"/></svg>
<div class="pu" style="left:1337px;top:876px"></div>
<div class="lb" style="left:1345px;top:875px"><span>A</span></div>
<div class="pu" style="left:1337px;top:888px"></div>
<div class="lb" style="left:1345px;top:886px"><span>B</span></div>
<div class="pc ar" style="left:1380px;top:876px;color:#eee"></div>
<div class="n f" style="left:1406px;top:893px;width:61px;height:32px"><div class="nh" style="height:10px;background:linear-gradient(to right,#4f7895 0px,#456884 24px,#232628 52px)"><span>MultiplyAdd</span></div></div>
<div class="pc" style="left:1409px;top:906px"></div>
<div class="lb" style="left:1417px;top:904px"><span>Base (V3) Result</span></div>
<div class="pc" style="left:1409px;top:916px"></div>
<div class="lb" style="left:1417px;top:915px"><span>Add (V3)</span></div>
<div class="pc ar" style="left:1458px;top:906px;color:#eee"></div>
<div class="n p" style="left:1310px;top:935px;width:76px;height:29px"><div class="nh" style="height:17px;background:linear-gradient(to right,#4e8836 0px,#5a9244 42px,#282c26 74px)"><span>Forcefield regen visibility</span><br><span class="ns">Param (1)</span></div><div class="tri dn" style="top:6px"></div></div>
<div class="pc ar" style="left:1377px;top:954px;color:#eee"></div>
<div class="n" style="left:1651px;top:586px;width:70px;height:202px;border:1px solid #b88a3c;background:#1c1c1c"><div class="nh" style="height:11px;background:linear-gradient(to right,#6a6058,#4a443e 60%,#2a2826)"><span style="font-size:6.4px;transform:scaleX(.8)">M_Forcefield_03</span></div></div>
<div class="pc" style="left:1656px;top:600px"></div>
<div class="lb" style="left:1662px;top:599px;color:#f4f4f4;font-size:6.2px;font-weight:bold"><span style="transform:scaleX(.78)">Base Color</span></div>
<div class="po" style="left:1656px;top:610px;border-color:#444"></div>
<div class="lb" style="left:1662px;top:609px;color:#3c3c3c;font-size:6.2px;font-weight:normal"><span style="transform:scaleX(.78)">Metallic</span></div>
<div class="po" style="left:1656px;top:622px;border-color:#444"></div>
<div class="lb" style="left:1662px;top:620px;color:#3c3c3c;font-size:6.2px;font-weight:normal"><span style="transform:scaleX(.78)">Specular</span></div>
<div class="po" style="left:1656px;top:632px;border-color:#444"></div>
<div class="lb" style="left:1662px;top:630px;color:#3c3c3c;font-size:6.2px;font-weight:normal"><span style="transform:scaleX(.78)">Roughness</span></div>
<div class="pc" style="left:1656px;top:642px"></div>
<div class="lb" style="left:1662px;top:641px;color:#f4f4f4;font-size:6.2px;font-weight:bold"><span style="transform:scaleX(.78)">Emissive Color</span></div>
<div class="pc" style="left:1656px;top:652px"></div>
<div class="lb" style="left:1662px;top:651px;color:#f4f4f4;font-size:6.2px;font-weight:bold"><span style="transform:scaleX(.78)">Opacity</span></div>
<div class="po" style="left:1656px;top:664px;border-color:#444"></div>
<div class="lb" style="left:1662px;top:662px;color:#3c3c3c;font-size:6.2px;font-weight:normal"><span style="transform:scaleX(.78)">Opacity Mask</span></div>
<div class="po" style="left:1656px;top:674px;border-color:#444"></div>
<div class="lb" style="left:1662px;top:672px;color:#3c3c3c;font-size:6.2px;font-weight:normal"><span style="transform:scaleX(.78)">Normal</span></div>
<div class="po" style="left:1656px;top:684px;border-color:#eee"></div>
<div class="lb" style="left:1662px;top:683px;color:#f4f4f4;font-size:6.2px;font-weight:bold"><span style="transform:scaleX(.78)">World Position Offset</span></div>
<div class="po" style="left:1656px;top:694px;border-color:#444"></div>
<div class="lb" style="left:1662px;top:693px;color:#3c3c3c;font-size:6.2px;font-weight:normal"><span style="transform:scaleX(.78)">World Displacement</span></div>
<div class="po" style="left:1656px;top:706px;border-color:#444"></div>
<div class="lb" style="left:1662px;top:704px;color:#3c3c3c;font-size:6.2px;font-weight:normal"><span style="transform:scaleX(.78)">Tessellation Multiplier</span></div>
<div class="po" style="left:1656px;top:716px;border-color:#444"></div>
<div class="lb" style="left:1662px;top:714px;color:#3c3c3c;font-size:6.2px;font-weight:normal"><span style="transform:scaleX(.78)">Subsurface Color</span></div>
<div class="po" style="left:1656px;top:726px;border-color:#444"></div>
<div class="lb" style="left:1662px;top:725px;color:#3c3c3c;font-size:6.2px;font-weight:normal"><span style="transform:scaleX(.78)">Custom Data 0</span></div>
<div class="po" style="left:1656px;top:736px;border-color:#444"></div>
<div class="lb" style="left:1662px;top:735px;color:#3c3c3c;font-size:6.2px;font-weight:normal"><span style="transform:scaleX(.78)">Custom Data 1</span></div>
<div class="po" style="left:1656px;top:748px;border-color:#eee"></div>
<div class="lb" style="left:1662px;top:746px;color:#f4f4f4;font-size:6.2px;font-weight:bold"><span style="transform:scaleX(.78)">Ambient Occlusion</span></div>
<div class="po" style="left:1656px;top:758px;border-color:#eee"></div>
<div class="lb" style="left:1662px;top:756px;color:#f4f4f4;font-size:6.2px;font-weight:bold"><span style="transform:scaleX(.78)">Refraction</span></div>
<div class="po" style="left:1656px;top:768px;border-color:#444"></div>
<div class="lb" style="left:1662px;top:767px;color:#3c3c3c;font-size:6.2px;font-weight:normal"><span style="transform:scaleX(.78)">Pixel Depth Offset</span></div>
<div class="po" style="left:1656px;top:778px;border-color:#444"></div>
<div class="lb" style="left:1662px;top:777px;color:#3c3c3c;font-size:6.2px;font-weight:normal"><span style="transform:scaleX(.78)">Shading Model</span></div>
<div class="a" style="left:926px;top:754px;width:100px;height:10px;background:linear-gradient(#e4e4e4,#d2d2d2);color:#6a6a6a;font-size:6.4px;line-height:10px;padding-left:4px;white-space:nowrap;overflow:hidden"><span style="display:inline-block;transform-origin:0 50%;transform:scaleX(.84)">Lower number = greater interference</span></div>
</body></html>
